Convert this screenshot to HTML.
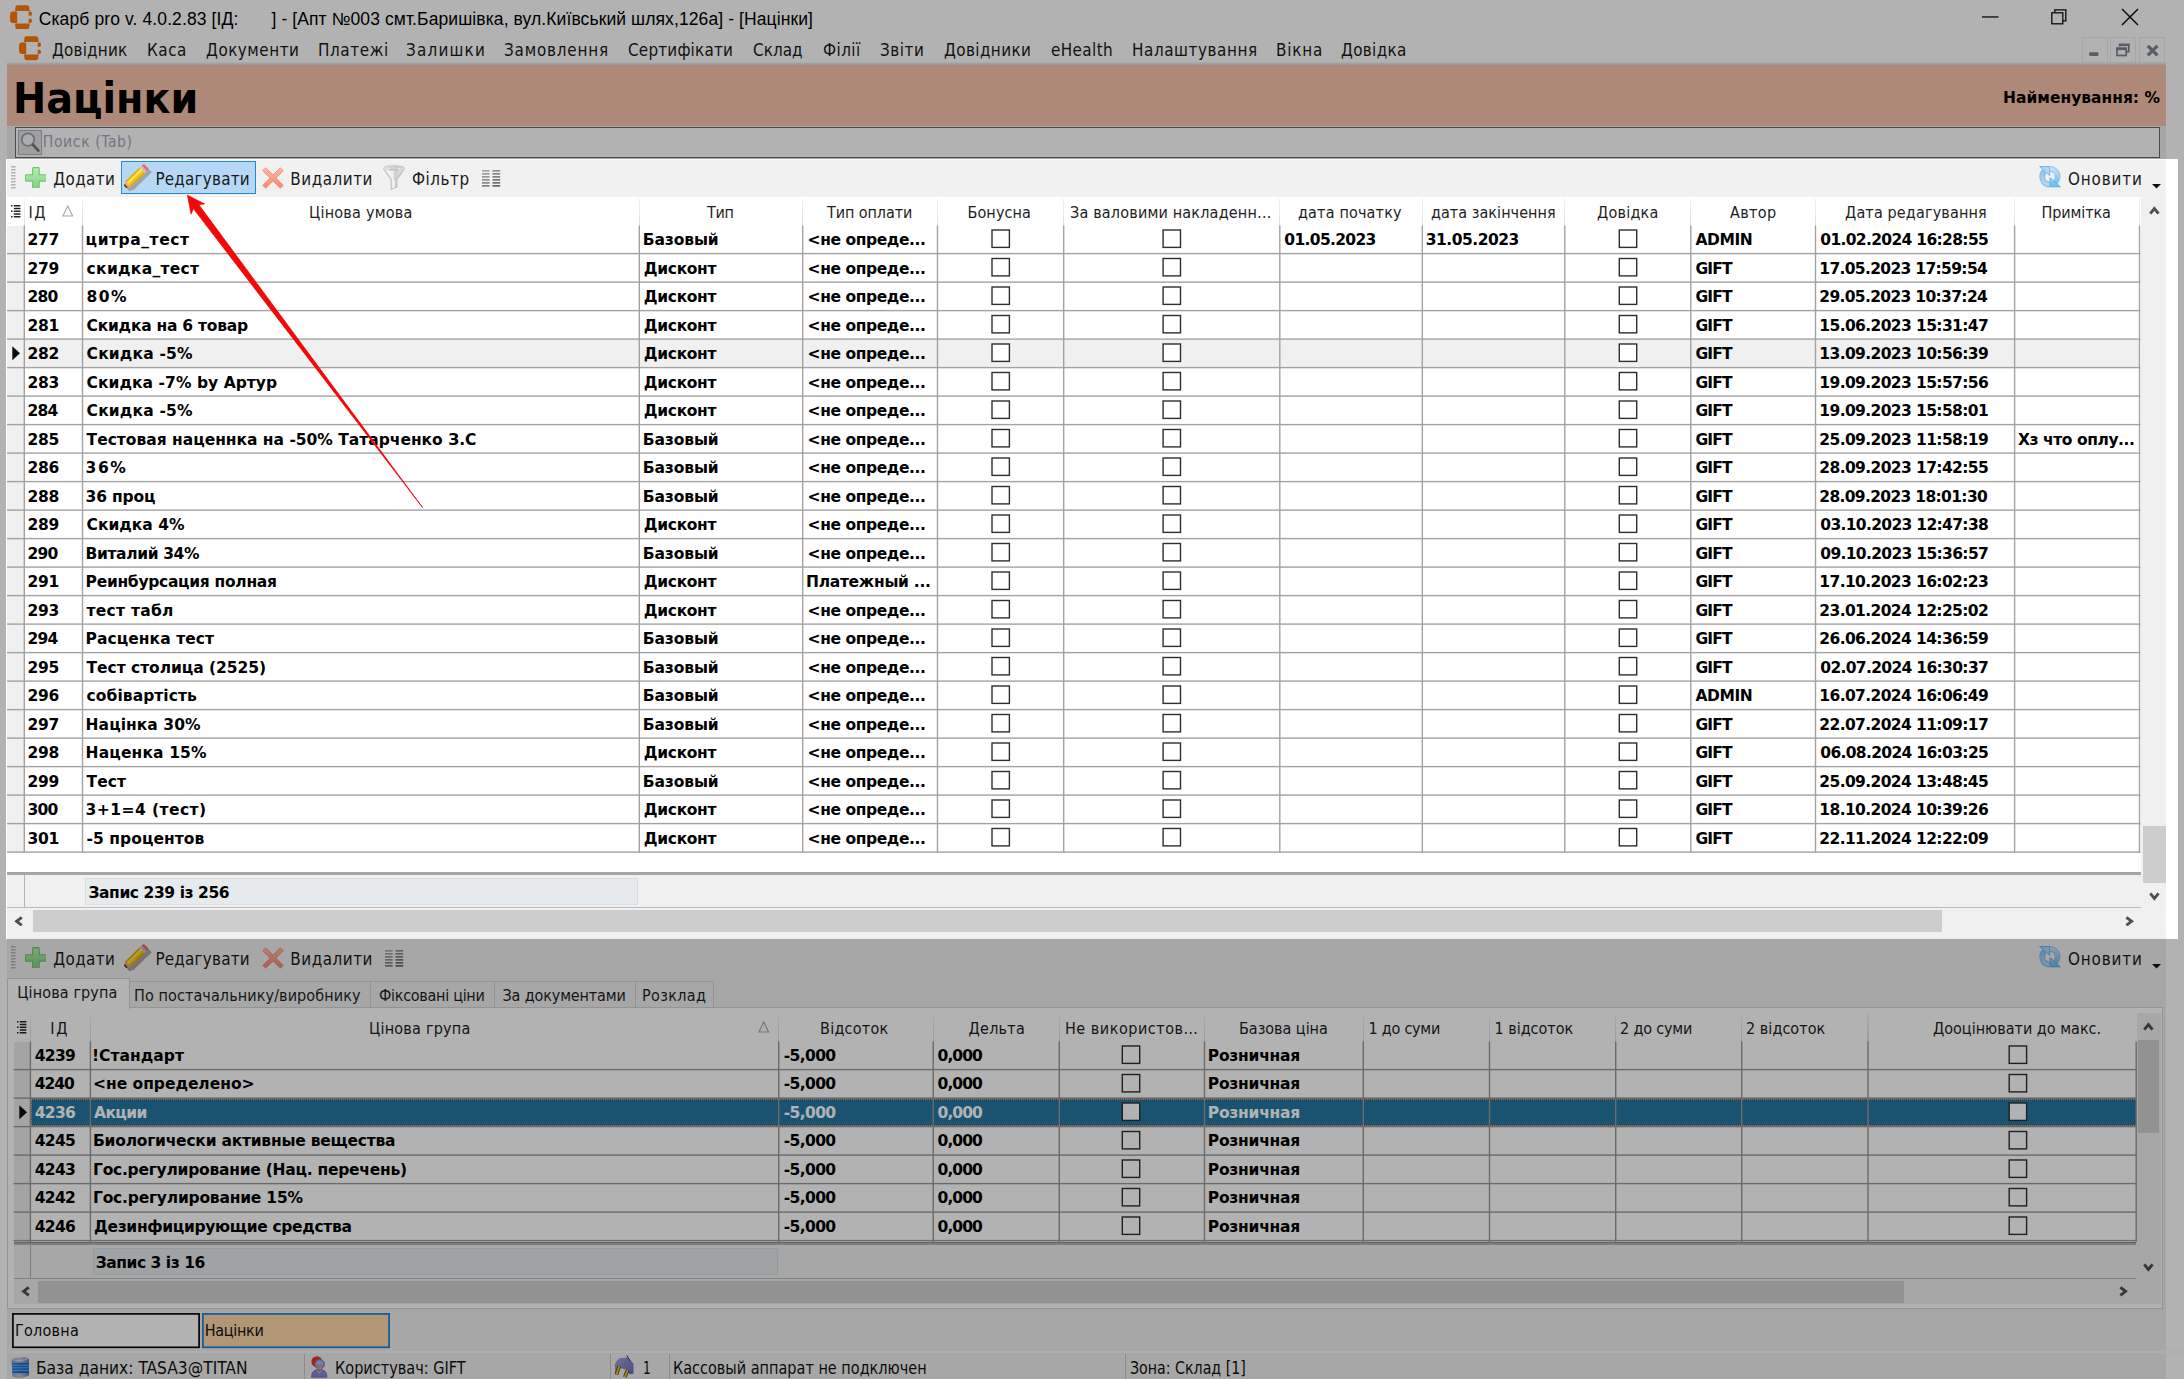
<!DOCTYPE html>
<html lang="uk"><head><meta charset="utf-8"><title>Націнки</title>
<style>
html,body{margin:0;padding:0;}
body{width:2184px;height:1379px;overflow:hidden;position:relative;background:#fff;}
.r{position:absolute;display:block;}
.t{position:absolute;white-space:pre;display:block;}
.dj{font-family:"DejaVu Sans","Liberation Sans",sans-serif;}
.djc{font-family:"DejaVu Sans Condensed","DejaVu Sans","Liberation Sans",sans-serif;}
.lib{font-family:"Liberation Sans",sans-serif;}
</style></head><body>
<svg width="0" height="0" style="position:absolute;left:0;top:0"><defs><linearGradient id="pg" x1="0" y1="0" x2="0" y2="1"><stop offset="0" stop-color="#aef2ae"/><stop offset="1" stop-color="#84d084"/></linearGradient><linearGradient id="xg" x1="0" y1="0" x2="0" y2="1"><stop offset="0" stop-color="#ffb9a4"/><stop offset="1" stop-color="#f58672"/></linearGradient><linearGradient id="fg" x1="0" y1="0" x2="1" y2="0"><stop offset="0" stop-color="#f6f6f6"/><stop offset=".5" stop-color="#ececec"/><stop offset=".52" stop-color="#cfcfcf"/><stop offset="1" stop-color="#e2e2e2"/></linearGradient><linearGradient id="rg" x1="0" y1="0" x2="0" y2="1"><stop offset="0" stop-color="#a4d6fa"/><stop offset="1" stop-color="#b4dcf6"/></linearGradient><linearGradient id="rg2" x1="0" y1="0" x2="0" y2="1"><stop offset="0" stop-color="#b4daf6"/><stop offset=".5" stop-color="#86c6f2"/><stop offset="1" stop-color="#58c4fa"/></linearGradient><linearGradient id="rg3" x1="0" y1="0" x2="0" y2="1"><stop offset="0" stop-color="#8cc4f0"/><stop offset="1" stop-color="#b2d8f4"/></linearGradient><linearGradient id="rg4" x1="0" y1="0" x2="0" y2="1"><stop offset="0" stop-color="#c4e0f6"/><stop offset="1" stop-color="#7cc0f0"/></linearGradient><linearGradient id="dbg" x1="0" x2="1" y1="0" y2="0"><stop offset="0" stop-color="#9a9ac8"/><stop offset=".45" stop-color="#c4c4de"/><stop offset="1" stop-color="#7c7cb0"/></linearGradient><linearGradient id="dbb" x1="0" x2="1" y1="0" y2="0"><stop offset="0" stop-color="#2a86e6"/><stop offset=".5" stop-color="#1670d6"/><stop offset="1" stop-color="#1c62c0"/></linearGradient><linearGradient id="plg" x1="0" x2="1" y1="0" y2="1"><stop offset="0" stop-color="#a4a4dc"/><stop offset="1" stop-color="#6a6ab8"/></linearGradient></defs></svg>
<div class="r" style="left:0.00px;top:0.00px;width:2184.00px;height:1379.00px;background:#f0f0f0;"></div>
<div class="r" style="left:0.00px;top:0.00px;width:2184.00px;height:62.50px;background:#ffffff;"></div>
<div class="r" style="left:7.00px;top:61.60px;width:2159.20px;height:3.20px;background:linear-gradient(#fafafa,#d6d6d6);"></div>
<div class="r" style="left:2166.20px;top:62.00px;width:18.00px;height:1320.00px;background:#ffffff;"></div>
<div class="r" style="left:0.00px;top:62.00px;width:7.00px;height:1320.00px;background:#ffffff;"></div>
<svg class="r" style="left:9.80px;top:4.60px;" width="22.0" height="24.5" viewBox="0 0 22 24.5"><g fill="#ff7a0a"><path d="M7.6 0.3h9.2c1.6 0 2.3 0.8 2.5 2.2l0.4 3.6H5l0.4-3.6C5.6 1.1 6.1 0.3 7.6 0.3z"/><path d="M7.6 24.2h9.2c1.6 0 2.3-0.8 2.5-2.2l0.4-3.6H5l0.4 3.6c0.2 1.4 0.7 2.2 2.2 2.2z"/><path d="M2.6 6.6h4.6v11.3H2.6c-1.5 0-2.3-0.9-2.4-2.3L0 12.2l0.2-3.3C0.3 7.5 1.1 6.6 2.6 6.6z"/><path d="M18.6 6.6h1.6c1.1 0 1.7 0.7 1.7 1.7v0.9c0 1-0.8 1.5-1.6 1.5h-1.7z"/><path d="M18.6 17.9h1.6c1.1 0 1.7-0.7 1.7-1.7v-0.9c0-1-0.8-1.5-1.6-1.5h-1.7z"/></g></svg>
<svg class="r" style="left:18.60px;top:36.40px;" width="22.0" height="24.5" viewBox="0 0 22 24.5"><g fill="#ff7a0a"><path d="M7.6 0.3h9.2c1.6 0 2.3 0.8 2.5 2.2l0.4 3.6H5l0.4-3.6C5.6 1.1 6.1 0.3 7.6 0.3z"/><path d="M7.6 24.2h9.2c1.6 0 2.3-0.8 2.5-2.2l0.4-3.6H5l0.4 3.6c0.2 1.4 0.7 2.2 2.2 2.2z"/><path d="M2.6 6.6h4.6v11.3H2.6c-1.5 0-2.3-0.9-2.4-2.3L0 12.2l0.2-3.3C0.3 7.5 1.1 6.6 2.6 6.6z"/><path d="M18.6 6.6h1.6c1.1 0 1.7 0.7 1.7 1.7v0.9c0 1-0.8 1.5-1.6 1.5h-1.7z"/><path d="M18.6 17.9h1.6c1.1 0 1.7-0.7 1.7-1.7v-0.9c0-1-0.8-1.5-1.6-1.5h-1.7z"/></g></svg>
<span class="t lib" style="left:38.70px;top:8.14px;font-size:17.5px;line-height:23px;color:#000;letter-spacing:0.110px;">Скарб pro v. 4.0.2.83 [ІД:</span>
<span class="t lib" style="left:271.50px;top:8.14px;font-size:17.5px;line-height:23px;color:#000;letter-spacing:0.095px;">] - [Апт №003 смт.Баришівка, вул.Київський шлях,126а] - [Націнки]</span>
<svg class="r" style="left:1982.00px;top:16.00px;" width="17" height="2" viewBox="0 0 17 2"><rect x="0" y="0.3" width="16.5" height="1.3" fill="#111"/></svg>
<svg class="r" style="left:2051.00px;top:9.00px;" width="16" height="16" viewBox="0 0 16 16"><g fill="none" stroke="#111" stroke-width="1.3"><rect x="0.8" y="3.8" width="11" height="11"/><path d="M3.8 3.8V0.8h11v11h-3"/></g></svg>
<svg class="r" style="left:2121.00px;top:8.00px;" width="18" height="18" viewBox="0 0 18 18"><path d="M1 1L17 17M17 1L1 17" stroke="#111" stroke-width="1.5" fill="none"/></svg>
<span class="t djc" style="left:52.00px;top:38.95px;font-size:16.9px;line-height:22px;color:#1a1a1a;letter-spacing:0.190px;">Довідник</span>
<span class="t djc" style="left:147.00px;top:38.95px;font-size:16.9px;line-height:22px;color:#1a1a1a;letter-spacing:0.516px;">Каса</span>
<span class="t djc" style="left:206.00px;top:38.95px;font-size:16.9px;line-height:22px;color:#1a1a1a;letter-spacing:0.507px;">Документи</span>
<span class="t djc" style="left:318.00px;top:38.95px;font-size:16.9px;line-height:22px;color:#1a1a1a;letter-spacing:0.608px;">Платежі</span>
<span class="t djc" style="left:406.00px;top:38.95px;font-size:16.9px;line-height:22px;color:#1a1a1a;letter-spacing:1.213px;">Залишки</span>
<span class="t djc" style="left:504.00px;top:38.95px;font-size:16.9px;line-height:22px;color:#1a1a1a;letter-spacing:0.810px;">Замовлення</span>
<span class="t djc" style="left:628.00px;top:38.95px;font-size:16.9px;line-height:22px;color:#1a1a1a;letter-spacing:0.211px;">Сертифікати</span>
<span class="t djc" style="left:753.00px;top:38.95px;font-size:16.9px;line-height:22px;color:#1a1a1a;letter-spacing:0.045px;">Склад</span>
<span class="t djc" style="left:823.00px;top:38.95px;font-size:16.9px;line-height:22px;color:#1a1a1a;letter-spacing:0.440px;">Філії</span>
<span class="t djc" style="left:880.00px;top:38.95px;font-size:16.9px;line-height:22px;color:#1a1a1a;letter-spacing:0.558px;">Звіти</span>
<span class="t djc" style="left:944.00px;top:38.95px;font-size:16.9px;line-height:22px;color:#1a1a1a;letter-spacing:0.394px;">Довідники</span>
<span class="t djc" style="left:1051.00px;top:38.95px;font-size:16.9px;line-height:22px;color:#1a1a1a;letter-spacing:0.396px;">eHealth</span>
<span class="t djc" style="left:1132.00px;top:38.95px;font-size:16.9px;line-height:22px;color:#1a1a1a;letter-spacing:0.577px;">Налаштування</span>
<span class="t djc" style="left:1276.00px;top:38.95px;font-size:16.9px;line-height:22px;color:#1a1a1a;letter-spacing:0.809px;">Вікна</span>
<span class="t djc" style="left:1341.00px;top:38.95px;font-size:16.9px;line-height:22px;color:#1a1a1a;letter-spacing:0.327px;">Довідка</span>
<div class="r" style="left:2081.80px;top:37.00px;width:26.00px;height:25.60px;background:#ffffff;border:1px solid #eeeeee;box-sizing:border-box;"></div>
<div class="r" style="left:2110.30px;top:37.00px;width:26.00px;height:25.60px;background:#ffffff;border:1px solid #eeeeee;box-sizing:border-box;"></div>
<div class="r" style="left:2139.00px;top:37.00px;width:26.00px;height:25.60px;background:#ffffff;border:1px solid #eeeeee;box-sizing:border-box;"></div>
<svg class="r" style="left:2081.80px;top:37.00px;" width="26" height="25.6" viewBox="0 0 26 25.6"><rect x="7.200" y="15.300" width="9.200" height="3.800" rx="0.800" fill="#7d8798"/></svg>
<svg class="r" style="left:2110.30px;top:37.00px;" width="26" height="25.6" viewBox="0 0 26 25.6"><g fill="none" stroke="#7d8798" stroke-width="1.700"><path d="M9.600 9.500V7.500h9.200v7.200h-2.400"/><rect x="7" y="11.300" width="9.200" height="7.200"/></g><rect x="9" y="6.700" width="10.600" height="2.400" fill="#7d8798"/><rect x="6.200" y="10.500" width="10.800" height="2.600" fill="#7d8798"/></svg>
<svg class="r" style="left:2139.00px;top:37.00px;" width="26" height="25.6" viewBox="0 0 26 25.6"><path d="M8.800 8.800L18.400 18.400M18.400 8.800L8.800 18.400" stroke="#7d8798" stroke-width="3.200" fill="none"/></svg>
<div class="r" style="left:7.00px;top:64.60px;width:2159.00px;height:61.60px;background:#fac5ab;"></div>
<span class="t dj" style="left:13.35px;top:70.05px;font-size:43.5px;line-height:57px;color:#000;font-weight:bold;transform:scaleX(0.9126);transform-origin:0 0;">Націнки</span>
<span class="t dj" style="left:2002.68px;top:87.54px;font-size:15.2px;line-height:20px;color:#000;font-weight:bold;transform:scaleX(1.0199);transform-origin:0 0;">Найменування: %</span>
<div class="r" style="left:7.00px;top:126.20px;width:2159.00px;height:32.50px;background:#f0f0f0;"></div>
<div class="r" style="left:15.00px;top:127.20px;width:2144.50px;height:31.20px;background:#ffffff;border:1.6px solid #6a6a6a;box-sizing:border-box;"></div>
<div class="r" style="left:18.00px;top:130.00px;width:23.50px;height:24.50px;background:#e4e4e4;border:1px solid #b5b5b5;box-sizing:border-box;"></div>
<svg class="r" style="left:19.00px;top:131.00px;" width="22" height="22" viewBox="0 0 22 22"><circle cx="9" cy="8.6" r="6.3" fill="#f4f8fc" stroke="#9aa3ad" stroke-width="1.8"/><path d="M13.6 13.4L19.4 19.6" stroke="#777" stroke-width="2.8" stroke-linecap="round"/></svg>
<span class="t djc" style="left:42.80px;top:131.50px;font-size:15.6px;line-height:20px;color:#a4aabc;letter-spacing:0.595px;">Поиск (Tab)</span>
<div class="r" style="left:5.90px;top:159.00px;width:2172.20px;height:780.20px;background:#ffffff;"></div>
<div class="r" style="left:7.00px;top:159.00px;width:2159.20px;height:780.40px;background:#f1f1f1;"></div>
<div class="r" style="left:7.00px;top:159.00px;width:2159.20px;height:1.20px;background:#fcfcfc;"></div>
<svg class="r" style="left:11.40px;top:165.60px;" width="4.6" height="23" viewBox="0 0 4.6 23"><rect x="0" y="0.0" width="4.600" height="1.500" fill="#b2b2b2"/><rect x="0" y="3.0" width="4.600" height="1.500" fill="#b2b2b2"/><rect x="0" y="6.0" width="4.600" height="1.500" fill="#b2b2b2"/><rect x="0" y="9.0" width="4.600" height="1.500" fill="#b2b2b2"/><rect x="0" y="12.0" width="4.600" height="1.500" fill="#b2b2b2"/><rect x="0" y="15.0" width="4.600" height="1.500" fill="#b2b2b2"/><rect x="0" y="18.0" width="4.600" height="1.500" fill="#b2b2b2"/><rect x="0" y="21.0" width="4.600" height="1.500" fill="#b2b2b2"/></svg>
<svg class="r" style="left:24.70px;top:166.50px;" width="21.6" height="21.4" viewBox="0 0 21.6 21.4"><path d="M8.6 0.6h4.6q1 0 1 1v6.200h6.200q1 0 1 1v4.300q0 1-1 1h-6.200v6.200q0 1-1 1H8.600q-1 0-1-1v-6.200H1.400q-1 0-1-1V8.800q0-1 1-1h6.200V1.600q0-1 1-1z" fill="url(#pg)" stroke="#72c472" stroke-width="1.1"/></svg>
<span class="t djc" style="left:53.20px;top:167.75px;font-size:16.9px;line-height:22px;color:#1a1a1a;letter-spacing:0.392px;">Додати</span>
<div class="r" style="left:121.20px;top:161.00px;width:134.60px;height:33.00px;background:#b6d8f5;border:1.8px solid #2488d8;box-sizing:border-box;"></div>
<svg class="r" style="left:121.60px;top:162.00px;" width="32" height="32" viewBox="0 0 32 32"><g transform="translate(6.100,28) rotate(-44.200)"><path d="M0 -1.600L4.200 -3.800H29.300V3.800H4.200L0 1.600z" fill="#a0a0a0" opacity=".92"/></g><g transform="translate(3.200,24.800) rotate(-44.200)"><path d="M0 -1.600L4.200 -3.800H23.800V3.800H4.200L0 1.600z" fill="#f6c60a"/><path d="M4.200 -3.800H23.800V-2.600H4.200z" fill="#d9a514"/><path d="M4.200 -1.900H23.800V0.100H4.200z" fill="#fde46a"/><path d="M4.200 2.400H23.800V3.800H4.200z" fill="#dfa80c"/><path d="M0 -1.600L4.200 -3.800V3.800L0 1.600z" fill="#f4a47c"/><path d="M0 -1.600L1.500 -2.300V2.300L0 1.600z" fill="#3a3430"/><path d="M23.800 -3.800h2.800V3.800h-2.800z" fill="#d4d4d4"/><path d="M24.900 -3.800h0.800V3.800h-0.800z" fill="#a8a8a8"/><path d="M26.600 -3.800h1.200q1.600 0 1.600 1.600v4.400q0 1.600 -1.600 1.600h-1.200z" fill="#f06464"/></g></svg>
<span class="t djc" style="left:155.40px;top:167.75px;font-size:16.9px;line-height:22px;color:#1a1a1a;letter-spacing:0.220px;">Редагувати</span>
<svg class="r" style="left:261.50px;top:166.60px;" width="22" height="22" viewBox="0 0 22 22"><path d="M3.700 0.700L11 8 18.300 0.700 21.300 3.700 14 11 21.300 18.300 18.300 21.300 11 14 3.700 21.300 0.700 18.300 8 11 0.700 3.700z" fill="url(#xg)" stroke="#f2917e" stroke-width="0.9" stroke-linejoin="round"/></svg>
<span class="t djc" style="left:290.30px;top:167.75px;font-size:16.9px;line-height:22px;color:#1a1a1a;letter-spacing:0.521px;">Видалити</span>
<svg class="r" style="left:383.00px;top:164.70px;" width="22" height="25" viewBox="0 0 22 25"><path d="M0.700 3.500C0.700 1.800 5 0.700 11 0.700s10.300 1.100 10.300 2.800c0 0.800 -0.600 1.400 -1.400 2.400L13.800 14.600V22L8.200 24.200V14.600L2.100 5.900C1.300 4.900 0.700 4.300 0.700 3.500z" fill="url(#fg)" stroke="#bdbdbd" stroke-width="1.100"/><ellipse cx="11" cy="3.800" rx="8" ry="1.500" fill="#f4f4f4" stroke="#c4c4c4" stroke-width=".9"/><path d="M6.500 4.100h9" stroke="#a8a8a8" stroke-width="1"/><path d="M11 15.500V22.500" stroke="#f6f6f6" stroke-width="1.400"/></svg>
<span class="t djc" style="left:412.00px;top:167.75px;font-size:16.9px;line-height:22px;color:#1a1a1a;letter-spacing:0.535px;">Фільтр</span>
<svg class="r" style="left:482.40px;top:169.60px;" width="18.4" height="17" viewBox="0 0 18.4 17"><rect x="0" y="0.00" width="7.600" height="1.700" fill="#a8a8a8"/><rect x="10.500" y="0.00" width="7.700" height="1.700" fill="#909090"/><rect x="0" y="3.00" width="7.600" height="1.700" fill="#a0a0a0"/><rect x="10.500" y="3.00" width="7.700" height="1.700" fill="#878787"/><rect x="0" y="6.00" width="7.600" height="1.700" fill="#989898"/><rect x="10.500" y="6.00" width="7.700" height="1.700" fill="#7e7e7e"/><rect x="0" y="9.00" width="7.600" height="1.700" fill="#909090"/><rect x="10.500" y="9.00" width="7.700" height="1.700" fill="#757575"/><rect x="0" y="12.00" width="7.600" height="1.700" fill="#888888"/><rect x="10.500" y="12.00" width="7.700" height="1.700" fill="#6c6c6c"/><rect x="0" y="15.00" width="7.600" height="1.700" fill="#808080"/><rect x="10.500" y="15.00" width="7.700" height="1.700" fill="#636363"/></svg>
<svg class="r" style="left:2038.90px;top:166.20px;" width="22" height="21.4" viewBox="0 0 22 21.4"><path d="M10.800 18.600C5.900 18.300 3.100 14.600 3.200 10.600 3.300 8.400 4 6.600 5.400 5.200" fill="none" stroke="#7ab6ea" stroke-width="5.800"/><path d="M10.800 18.600C5.900 18.300 3.100 14.600 3.200 10.600 3.300 8.400 4 6.600 5.400 5.200" fill="none" stroke="url(#rg3)" stroke-width="4"/><path d="M0.600 0.500H10.700V9.500z" fill="url(#rg)" stroke="#74b2e8" stroke-width="1" stroke-linejoin="round"/><path d="M11 2.800C15.900 3.100 18.700 6.800 18.600 10.800 18.500 13 17.800 14.800 16.400 16.200" fill="none" stroke="#8cc2ec" stroke-width="5.800"/><path d="M11 2.800C15.900 3.100 18.700 6.800 18.600 10.800 18.500 13 17.800 14.800 16.400 16.200" fill="none" stroke="url(#rg4)" stroke-width="4"/><path d="M21.300 20.800H11.100V11.800z" fill="url(#rg2)" stroke="#5aaae6" stroke-width="1" stroke-linejoin="round"/></svg>
<span class="t djc" style="left:2068.00px;top:167.75px;font-size:16.9px;line-height:22px;color:#1a1a1a;letter-spacing:0.855px;">Оновити</span>
<svg class="r" style="left:2151.50px;top:183.90px;" width="9" height="5" viewBox="0 0 9 5"><path d="M0 0h9L4.5 4.6z" fill="#111"/></svg>
<div class="r" style="left:7.00px;top:196.60px;width:2133.50px;height:29.00px;background:#ffffff;"></div>
<div class="r" style="left:7.00px;top:225.60px;width:2133.50px;height:626.50px;background:#ffffff;"></div>
<div class="r" style="left:7.00px;top:852.00px;width:2133.50px;height:20.60px;background:#ffffff;"></div>
<div class="r" style="left:23.70px;top:198.00px;width:1.30px;height:27.60px;background:linear-gradient(#f4f4f4,#dedede);"></div>
<div class="r" style="left:81.90px;top:198.00px;width:1.30px;height:27.60px;background:linear-gradient(#f4f4f4,#dedede);"></div>
<div class="r" style="left:638.70px;top:198.00px;width:1.30px;height:27.60px;background:linear-gradient(#f4f4f4,#dedede);"></div>
<div class="r" style="left:802.10px;top:198.00px;width:1.30px;height:27.60px;background:linear-gradient(#f4f4f4,#dedede);"></div>
<div class="r" style="left:936.90px;top:198.00px;width:1.30px;height:27.60px;background:linear-gradient(#f4f4f4,#dedede);"></div>
<div class="r" style="left:1063.10px;top:198.00px;width:1.30px;height:27.60px;background:linear-gradient(#f4f4f4,#dedede);"></div>
<div class="r" style="left:1279.20px;top:198.00px;width:1.30px;height:27.60px;background:linear-gradient(#f4f4f4,#dedede);"></div>
<div class="r" style="left:1421.70px;top:198.00px;width:1.30px;height:27.60px;background:linear-gradient(#f4f4f4,#dedede);"></div>
<div class="r" style="left:1564.20px;top:198.00px;width:1.30px;height:27.60px;background:linear-gradient(#f4f4f4,#dedede);"></div>
<div class="r" style="left:1690.20px;top:198.00px;width:1.30px;height:27.60px;background:linear-gradient(#f4f4f4,#dedede);"></div>
<div class="r" style="left:1814.90px;top:198.00px;width:1.30px;height:27.60px;background:linear-gradient(#f4f4f4,#dedede);"></div>
<div class="r" style="left:2014.00px;top:198.00px;width:1.30px;height:27.60px;background:linear-gradient(#f4f4f4,#dedede);"></div>
<div class="r" style="left:2138.90px;top:198.00px;width:1.30px;height:27.60px;background:linear-gradient(#f4f4f4,#dedede);"></div>
<svg class="r" style="left:11.20px;top:204.60px;" width="9.5" height="13" viewBox="0 0 9.5 13"><rect x="0" y="0.00" width="1.500" height="1.500" fill="#222"/><rect x="2.800" y="0.00" width="6.600" height="1.500" fill="#222"/><rect x="2.800" y="2.75" width="6.600" height="1.500" fill="#222"/><rect x="0" y="5.50" width="1.500" height="1.500" fill="#222"/><rect x="2.800" y="5.50" width="6.600" height="1.500" fill="#222"/><rect x="2.800" y="8.25" width="6.600" height="1.500" fill="#222"/><rect x="0" y="11.00" width="1.500" height="1.500" fill="#222"/><rect x="2.800" y="11.00" width="6.600" height="1.500" fill="#222"/></svg>
<span class="t djc" style="left:28.50px;top:201.96px;font-size:16px;line-height:21px;color:#1e1e1e;letter-spacing:1.600px;">ІД</span>
<span class="t djc" style="left:309.00px;top:201.96px;font-size:16px;line-height:21px;color:#1e1e1e;letter-spacing:0.233px;">Цінова умова</span>
<span class="t djc" style="left:707.00px;top:201.96px;font-size:16px;line-height:21px;color:#1e1e1e;letter-spacing:-0.320px;">Тип</span>
<span class="t djc" style="left:827.00px;top:201.96px;font-size:16px;line-height:21px;color:#1e1e1e;letter-spacing:-0.083px;">Тип оплати</span>
<span class="t djc" style="left:967.50px;top:201.96px;font-size:16px;line-height:21px;color:#1e1e1e;letter-spacing:0.094px;">Бонусна</span>
<span class="t djc" style="left:1070.00px;top:201.96px;font-size:16px;line-height:21px;color:#1e1e1e;letter-spacing:0.184px;">За валовими накладенн…</span>
<span class="t djc" style="left:1298.00px;top:201.96px;font-size:16px;line-height:21px;color:#1e1e1e;letter-spacing:0.166px;">дата початку</span>
<span class="t djc" style="left:1431.00px;top:201.96px;font-size:16px;line-height:21px;color:#1e1e1e;letter-spacing:0.048px;">дата закінчення</span>
<span class="t djc" style="left:1597.00px;top:201.96px;font-size:16px;line-height:21px;color:#1e1e1e;letter-spacing:0.219px;">Довідка</span>
<span class="t djc" style="left:1730.00px;top:201.96px;font-size:16px;line-height:21px;color:#1e1e1e;letter-spacing:0.371px;">Автор</span>
<span class="t djc" style="left:1845.00px;top:201.96px;font-size:16px;line-height:21px;color:#1e1e1e;letter-spacing:0.145px;">Дата редагування</span>
<span class="t djc" style="left:2041.50px;top:201.96px;font-size:16px;line-height:21px;color:#1e1e1e;letter-spacing:-0.108px;">Примітка</span>
<svg class="r" style="left:61.80px;top:204.60px;" width="11.5" height="12" viewBox="0 0 11.5 12"><path d="M5.75 1L10.6 11H0.9z" fill="#fdfdfd" stroke="#a8a8a8" stroke-width="1.1"/></svg>
<div class="r" style="left:24.30px;top:339.60px;width:2115.50px;height:28.50px;background:#f0f0f0;"></div>
<div class="r" style="left:7.00px;top:225.60px;width:17.30px;height:626.80px;background:#f0f0f0;"></div>
<svg class="r" style="left:0;top:0;pointer-events:none" width="2184" height="1379" viewBox="0 0 2184 1379"><rect x="7.00" y="252.90" width="2133.50" height="1.40" fill="#a2a2a2"/><rect x="7.00" y="281.40" width="2133.50" height="1.40" fill="#a2a2a2"/><rect x="7.00" y="309.90" width="2133.50" height="1.40" fill="#a2a2a2"/><rect x="7.00" y="338.40" width="2133.50" height="1.40" fill="#a2a2a2"/><rect x="7.00" y="366.90" width="2133.50" height="1.40" fill="#a2a2a2"/><rect x="7.00" y="395.40" width="2133.50" height="1.40" fill="#a2a2a2"/><rect x="7.00" y="423.90" width="2133.50" height="1.40" fill="#a2a2a2"/><rect x="7.00" y="452.40" width="2133.50" height="1.40" fill="#a2a2a2"/><rect x="7.00" y="480.90" width="2133.50" height="1.40" fill="#a2a2a2"/><rect x="7.00" y="509.40" width="2133.50" height="1.40" fill="#a2a2a2"/><rect x="7.00" y="537.90" width="2133.50" height="1.40" fill="#a2a2a2"/><rect x="7.00" y="566.40" width="2133.50" height="1.40" fill="#a2a2a2"/><rect x="7.00" y="594.90" width="2133.50" height="1.40" fill="#a2a2a2"/><rect x="7.00" y="623.40" width="2133.50" height="1.40" fill="#a2a2a2"/><rect x="7.00" y="651.90" width="2133.50" height="1.40" fill="#a2a2a2"/><rect x="7.00" y="680.40" width="2133.50" height="1.40" fill="#a2a2a2"/><rect x="7.00" y="708.90" width="2133.50" height="1.40" fill="#a2a2a2"/><rect x="7.00" y="737.40" width="2133.50" height="1.40" fill="#a2a2a2"/><rect x="7.00" y="765.90" width="2133.50" height="1.40" fill="#a2a2a2"/><rect x="7.00" y="794.40" width="2133.50" height="1.40" fill="#a2a2a2"/><rect x="7.00" y="822.90" width="2133.50" height="1.40" fill="#a2a2a2"/><rect x="7.00" y="851.40" width="2133.50" height="1.40" fill="#a2a2a2"/><rect x="23.60" y="225.60" width="1.40" height="626.80" fill="#a2a2a2"/><rect x="81.80" y="225.60" width="1.40" height="626.80" fill="#a2a2a2"/><rect x="638.60" y="225.60" width="1.40" height="626.80" fill="#a2a2a2"/><rect x="802.00" y="225.60" width="1.40" height="626.80" fill="#a2a2a2"/><rect x="936.80" y="225.60" width="1.40" height="626.80" fill="#a2a2a2"/><rect x="1063.00" y="225.60" width="1.40" height="626.80" fill="#a2a2a2"/><rect x="1279.10" y="225.60" width="1.40" height="626.80" fill="#a2a2a2"/><rect x="1421.60" y="225.60" width="1.40" height="626.80" fill="#a2a2a2"/><rect x="1564.10" y="225.60" width="1.40" height="626.80" fill="#a2a2a2"/><rect x="1690.10" y="225.60" width="1.40" height="626.80" fill="#a2a2a2"/><rect x="1814.80" y="225.60" width="1.40" height="626.80" fill="#a2a2a2"/><rect x="2013.90" y="225.60" width="1.40" height="626.80" fill="#a2a2a2"/><rect x="2138.80" y="225.60" width="1.40" height="626.80" fill="#a2a2a2"/></svg>
<span class="t dj" style="left:27.60px;top:230.14px;font-size:15.5px;line-height:20px;color:#000;font-weight:bold;letter-spacing:-0.285px;">277</span>
<span class="t dj" style="left:85.60px;top:230.14px;font-size:15.5px;line-height:20px;color:#000;font-weight:bold;letter-spacing:0.564px;">цитра_тест</span>
<span class="t dj" style="left:642.80px;top:230.14px;font-size:15.5px;line-height:20px;color:#000;font-weight:bold;letter-spacing:-0.126px;">Базовый</span>
<span class="t dj" style="left:807.60px;top:230.14px;font-size:15.5px;line-height:20px;color:#000;font-weight:bold;letter-spacing:-0.415px;">&lt;не опреде...</span>
<span class="t dj" style="left:1284.30px;top:230.14px;font-size:15.5px;line-height:20px;color:#000;font-weight:bold;letter-spacing:-0.663px;">01.05.2023</span>
<span class="t dj" style="left:1425.80px;top:230.14px;font-size:15.5px;line-height:20px;color:#000;font-weight:bold;letter-spacing:-0.497px;">31.05.2023</span>
<span class="t dj" style="left:1695.50px;top:230.14px;font-size:15.5px;line-height:20px;color:#000;font-weight:bold;letter-spacing:-0.438px;">ADMIN</span>
<span class="t dj" style="left:1820.30px;top:230.14px;font-size:15.5px;line-height:20px;color:#000;font-weight:bold;letter-spacing:-0.671px;">01.02.2024 16:28:55</span>
<span class="t dj" style="left:27.60px;top:258.64px;font-size:15.5px;line-height:20px;color:#000;font-weight:bold;letter-spacing:-0.285px;">279</span>
<span class="t dj" style="left:86.60px;top:258.64px;font-size:15.5px;line-height:20px;color:#000;font-weight:bold;letter-spacing:0.290px;">скидка_тест</span>
<span class="t dj" style="left:643.80px;top:258.64px;font-size:15.5px;line-height:20px;color:#000;font-weight:bold;letter-spacing:-0.339px;">Дисконт</span>
<span class="t dj" style="left:807.60px;top:258.64px;font-size:15.5px;line-height:20px;color:#000;font-weight:bold;letter-spacing:-0.415px;">&lt;не опреде...</span>
<span class="t dj" style="left:1695.50px;top:258.64px;font-size:15.5px;line-height:20px;color:#000;font-weight:bold;letter-spacing:-0.859px;">GIFT</span>
<span class="t dj" style="left:1819.30px;top:258.64px;font-size:15.5px;line-height:20px;color:#000;font-weight:bold;letter-spacing:-0.671px;">17.05.2023 17:59:54</span>
<span class="t dj" style="left:27.60px;top:287.14px;font-size:15.5px;line-height:20px;color:#000;font-weight:bold;letter-spacing:-0.785px;">280</span>
<span class="t dj" style="left:86.60px;top:287.14px;font-size:15.5px;line-height:20px;color:#000;font-weight:bold;letter-spacing:1.415px;">80%</span>
<span class="t dj" style="left:643.80px;top:287.14px;font-size:15.5px;line-height:20px;color:#000;font-weight:bold;letter-spacing:-0.339px;">Дисконт</span>
<span class="t dj" style="left:807.60px;top:287.14px;font-size:15.5px;line-height:20px;color:#000;font-weight:bold;letter-spacing:-0.415px;">&lt;не опреде...</span>
<span class="t dj" style="left:1695.50px;top:287.14px;font-size:15.5px;line-height:20px;color:#000;font-weight:bold;letter-spacing:-0.859px;">GIFT</span>
<span class="t dj" style="left:1819.30px;top:287.14px;font-size:15.5px;line-height:20px;color:#000;font-weight:bold;letter-spacing:-0.671px;">29.05.2023 10:37:24</span>
<span class="t dj" style="left:27.60px;top:315.64px;font-size:15.5px;line-height:20px;color:#000;font-weight:bold;letter-spacing:-0.285px;">281</span>
<span class="t dj" style="left:86.60px;top:315.64px;font-size:15.5px;line-height:20px;color:#000;font-weight:bold;letter-spacing:-0.244px;">Скидка на 6 товар</span>
<span class="t dj" style="left:643.80px;top:315.64px;font-size:15.5px;line-height:20px;color:#000;font-weight:bold;letter-spacing:-0.339px;">Дисконт</span>
<span class="t dj" style="left:807.60px;top:315.64px;font-size:15.5px;line-height:20px;color:#000;font-weight:bold;letter-spacing:-0.415px;">&lt;не опреде...</span>
<span class="t dj" style="left:1695.50px;top:315.64px;font-size:15.5px;line-height:20px;color:#000;font-weight:bold;letter-spacing:-0.859px;">GIFT</span>
<span class="t dj" style="left:1819.30px;top:315.64px;font-size:15.5px;line-height:20px;color:#000;font-weight:bold;letter-spacing:-0.615px;">15.06.2023 15:31:47</span>
<span class="t dj" style="left:27.60px;top:344.14px;font-size:15.5px;line-height:20px;color:#000;font-weight:bold;letter-spacing:-0.285px;">282</span>
<span class="t dj" style="left:86.60px;top:344.14px;font-size:15.5px;line-height:20px;color:#000;font-weight:bold;letter-spacing:0.170px;">Скидка -5%</span>
<span class="t dj" style="left:643.80px;top:344.14px;font-size:15.5px;line-height:20px;color:#000;font-weight:bold;letter-spacing:-0.339px;">Дисконт</span>
<span class="t dj" style="left:807.60px;top:344.14px;font-size:15.5px;line-height:20px;color:#000;font-weight:bold;letter-spacing:-0.415px;">&lt;не опреде...</span>
<span class="t dj" style="left:1695.50px;top:344.14px;font-size:15.5px;line-height:20px;color:#000;font-weight:bold;letter-spacing:-0.859px;">GIFT</span>
<span class="t dj" style="left:1819.30px;top:344.14px;font-size:15.5px;line-height:20px;color:#000;font-weight:bold;letter-spacing:-0.615px;">13.09.2023 10:56:39</span>
<span class="t dj" style="left:27.60px;top:372.64px;font-size:15.5px;line-height:20px;color:#000;font-weight:bold;letter-spacing:-0.285px;">283</span>
<span class="t dj" style="left:86.60px;top:372.64px;font-size:15.5px;line-height:20px;color:#000;font-weight:bold;letter-spacing:0.046px;">Скидка -7% by Артур</span>
<span class="t dj" style="left:643.80px;top:372.64px;font-size:15.5px;line-height:20px;color:#000;font-weight:bold;letter-spacing:-0.339px;">Дисконт</span>
<span class="t dj" style="left:807.60px;top:372.64px;font-size:15.5px;line-height:20px;color:#000;font-weight:bold;letter-spacing:-0.415px;">&lt;не опреде...</span>
<span class="t dj" style="left:1695.50px;top:372.64px;font-size:15.5px;line-height:20px;color:#000;font-weight:bold;letter-spacing:-0.859px;">GIFT</span>
<span class="t dj" style="left:1819.30px;top:372.64px;font-size:15.5px;line-height:20px;color:#000;font-weight:bold;letter-spacing:-0.615px;">19.09.2023 15:57:56</span>
<span class="t dj" style="left:27.60px;top:401.14px;font-size:15.5px;line-height:20px;color:#000;font-weight:bold;letter-spacing:-0.785px;">284</span>
<span class="t dj" style="left:86.60px;top:401.14px;font-size:15.5px;line-height:20px;color:#000;font-weight:bold;letter-spacing:0.170px;">Скидка -5%</span>
<span class="t dj" style="left:643.80px;top:401.14px;font-size:15.5px;line-height:20px;color:#000;font-weight:bold;letter-spacing:-0.339px;">Дисконт</span>
<span class="t dj" style="left:807.60px;top:401.14px;font-size:15.5px;line-height:20px;color:#000;font-weight:bold;letter-spacing:-0.415px;">&lt;не опреде...</span>
<span class="t dj" style="left:1695.50px;top:401.14px;font-size:15.5px;line-height:20px;color:#000;font-weight:bold;letter-spacing:-0.859px;">GIFT</span>
<span class="t dj" style="left:1819.30px;top:401.14px;font-size:15.5px;line-height:20px;color:#000;font-weight:bold;letter-spacing:-0.615px;">19.09.2023 15:58:01</span>
<span class="t dj" style="left:27.60px;top:429.64px;font-size:15.5px;line-height:20px;color:#000;font-weight:bold;letter-spacing:-0.285px;">285</span>
<span class="t dj" style="left:86.60px;top:429.64px;font-size:15.5px;line-height:20px;color:#000;font-weight:bold;letter-spacing:-0.012px;">Тестовая наценнка на -50% Татарченко З.С</span>
<span class="t dj" style="left:642.80px;top:429.64px;font-size:15.5px;line-height:20px;color:#000;font-weight:bold;letter-spacing:-0.126px;">Базовый</span>
<span class="t dj" style="left:807.60px;top:429.64px;font-size:15.5px;line-height:20px;color:#000;font-weight:bold;letter-spacing:-0.415px;">&lt;не опреде...</span>
<span class="t dj" style="left:1695.50px;top:429.64px;font-size:15.5px;line-height:20px;color:#000;font-weight:bold;letter-spacing:-0.859px;">GIFT</span>
<span class="t dj" style="left:1819.30px;top:429.64px;font-size:15.5px;line-height:20px;color:#000;font-weight:bold;letter-spacing:-0.615px;">25.09.2023 11:58:19</span>
<span class="t dj" style="left:2018.00px;top:429.64px;font-size:15.5px;line-height:20px;color:#000;font-weight:bold;letter-spacing:-0.432px;">Хз что оплу...</span>
<span class="t dj" style="left:27.60px;top:458.14px;font-size:15.5px;line-height:20px;color:#000;font-weight:bold;letter-spacing:-0.285px;">286</span>
<span class="t dj" style="left:85.60px;top:458.14px;font-size:15.5px;line-height:20px;color:#000;font-weight:bold;letter-spacing:1.600px;">36%</span>
<span class="t dj" style="left:642.80px;top:458.14px;font-size:15.5px;line-height:20px;color:#000;font-weight:bold;letter-spacing:-0.126px;">Базовый</span>
<span class="t dj" style="left:807.60px;top:458.14px;font-size:15.5px;line-height:20px;color:#000;font-weight:bold;letter-spacing:-0.415px;">&lt;не опреде...</span>
<span class="t dj" style="left:1695.50px;top:458.14px;font-size:15.5px;line-height:20px;color:#000;font-weight:bold;letter-spacing:-0.859px;">GIFT</span>
<span class="t dj" style="left:1819.30px;top:458.14px;font-size:15.5px;line-height:20px;color:#000;font-weight:bold;letter-spacing:-0.615px;">28.09.2023 17:42:55</span>
<span class="t dj" style="left:27.60px;top:486.64px;font-size:15.5px;line-height:20px;color:#000;font-weight:bold;letter-spacing:-0.285px;">288</span>
<span class="t dj" style="left:85.60px;top:486.64px;font-size:15.5px;line-height:20px;color:#000;font-weight:bold;letter-spacing:-0.170px;">36 проц</span>
<span class="t dj" style="left:642.80px;top:486.64px;font-size:15.5px;line-height:20px;color:#000;font-weight:bold;letter-spacing:-0.126px;">Базовый</span>
<span class="t dj" style="left:807.60px;top:486.64px;font-size:15.5px;line-height:20px;color:#000;font-weight:bold;letter-spacing:-0.415px;">&lt;не опреде...</span>
<span class="t dj" style="left:1695.50px;top:486.64px;font-size:15.5px;line-height:20px;color:#000;font-weight:bold;letter-spacing:-0.859px;">GIFT</span>
<span class="t dj" style="left:1819.30px;top:486.64px;font-size:15.5px;line-height:20px;color:#000;font-weight:bold;letter-spacing:-0.671px;">28.09.2023 18:01:30</span>
<span class="t dj" style="left:27.60px;top:515.14px;font-size:15.5px;line-height:20px;color:#000;font-weight:bold;letter-spacing:-0.285px;">289</span>
<span class="t dj" style="left:86.60px;top:515.14px;font-size:15.5px;line-height:20px;color:#000;font-weight:bold;letter-spacing:-0.004px;">Скидка 4%</span>
<span class="t dj" style="left:643.80px;top:515.14px;font-size:15.5px;line-height:20px;color:#000;font-weight:bold;letter-spacing:-0.339px;">Дисконт</span>
<span class="t dj" style="left:807.60px;top:515.14px;font-size:15.5px;line-height:20px;color:#000;font-weight:bold;letter-spacing:-0.415px;">&lt;не опреде...</span>
<span class="t dj" style="left:1695.50px;top:515.14px;font-size:15.5px;line-height:20px;color:#000;font-weight:bold;letter-spacing:-0.859px;">GIFT</span>
<span class="t dj" style="left:1820.30px;top:515.14px;font-size:15.5px;line-height:20px;color:#000;font-weight:bold;letter-spacing:-0.671px;">03.10.2023 12:47:38</span>
<span class="t dj" style="left:27.60px;top:543.64px;font-size:15.5px;line-height:20px;color:#000;font-weight:bold;letter-spacing:-0.785px;">290</span>
<span class="t dj" style="left:85.60px;top:543.64px;font-size:15.5px;line-height:20px;color:#000;font-weight:bold;letter-spacing:-0.376px;">Виталий 34%</span>
<span class="t dj" style="left:642.80px;top:543.64px;font-size:15.5px;line-height:20px;color:#000;font-weight:bold;letter-spacing:-0.126px;">Базовый</span>
<span class="t dj" style="left:807.60px;top:543.64px;font-size:15.5px;line-height:20px;color:#000;font-weight:bold;letter-spacing:-0.415px;">&lt;не опреде...</span>
<span class="t dj" style="left:1695.50px;top:543.64px;font-size:15.5px;line-height:20px;color:#000;font-weight:bold;letter-spacing:-0.859px;">GIFT</span>
<span class="t dj" style="left:1820.30px;top:543.64px;font-size:15.5px;line-height:20px;color:#000;font-weight:bold;letter-spacing:-0.671px;">09.10.2023 15:36:57</span>
<span class="t dj" style="left:27.60px;top:572.14px;font-size:15.5px;line-height:20px;color:#000;font-weight:bold;letter-spacing:-0.285px;">291</span>
<span class="t dj" style="left:85.60px;top:572.14px;font-size:15.5px;line-height:20px;color:#000;font-weight:bold;letter-spacing:-0.294px;">Реинбурсация полная</span>
<span class="t dj" style="left:643.80px;top:572.14px;font-size:15.5px;line-height:20px;color:#000;font-weight:bold;letter-spacing:-0.339px;">Дисконт</span>
<span class="t dj" style="left:806.00px;top:572.14px;font-size:15.5px;line-height:20px;color:#000;font-weight:bold;letter-spacing:-0.289px;">Платежный ...</span>
<span class="t dj" style="left:1695.50px;top:572.14px;font-size:15.5px;line-height:20px;color:#000;font-weight:bold;letter-spacing:-0.859px;">GIFT</span>
<span class="t dj" style="left:1819.30px;top:572.14px;font-size:15.5px;line-height:20px;color:#000;font-weight:bold;letter-spacing:-0.615px;">17.10.2023 16:02:23</span>
<span class="t dj" style="left:27.60px;top:600.64px;font-size:15.5px;line-height:20px;color:#000;font-weight:bold;letter-spacing:-0.285px;">293</span>
<span class="t dj" style="left:86.60px;top:600.64px;font-size:15.5px;line-height:20px;color:#000;font-weight:bold;letter-spacing:0.259px;">тест табл</span>
<span class="t dj" style="left:643.80px;top:600.64px;font-size:15.5px;line-height:20px;color:#000;font-weight:bold;letter-spacing:-0.339px;">Дисконт</span>
<span class="t dj" style="left:807.60px;top:600.64px;font-size:15.5px;line-height:20px;color:#000;font-weight:bold;letter-spacing:-0.415px;">&lt;не опреде...</span>
<span class="t dj" style="left:1695.50px;top:600.64px;font-size:15.5px;line-height:20px;color:#000;font-weight:bold;letter-spacing:-0.859px;">GIFT</span>
<span class="t dj" style="left:1819.30px;top:600.64px;font-size:15.5px;line-height:20px;color:#000;font-weight:bold;letter-spacing:-0.615px;">23.01.2024 12:25:02</span>
<span class="t dj" style="left:27.60px;top:629.14px;font-size:15.5px;line-height:20px;color:#000;font-weight:bold;letter-spacing:-0.785px;">294</span>
<span class="t dj" style="left:85.60px;top:629.14px;font-size:15.5px;line-height:20px;color:#000;font-weight:bold;letter-spacing:0.052px;">Расценка тест</span>
<span class="t dj" style="left:642.80px;top:629.14px;font-size:15.5px;line-height:20px;color:#000;font-weight:bold;letter-spacing:-0.126px;">Базовый</span>
<span class="t dj" style="left:807.60px;top:629.14px;font-size:15.5px;line-height:20px;color:#000;font-weight:bold;letter-spacing:-0.415px;">&lt;не опреде...</span>
<span class="t dj" style="left:1695.50px;top:629.14px;font-size:15.5px;line-height:20px;color:#000;font-weight:bold;letter-spacing:-0.859px;">GIFT</span>
<span class="t dj" style="left:1819.30px;top:629.14px;font-size:15.5px;line-height:20px;color:#000;font-weight:bold;letter-spacing:-0.615px;">26.06.2024 14:36:59</span>
<span class="t dj" style="left:27.60px;top:657.64px;font-size:15.5px;line-height:20px;color:#000;font-weight:bold;letter-spacing:-0.285px;">295</span>
<span class="t dj" style="left:86.60px;top:657.64px;font-size:15.5px;line-height:20px;color:#000;font-weight:bold;letter-spacing:-0.047px;">Тест столица (2525)</span>
<span class="t dj" style="left:642.80px;top:657.64px;font-size:15.5px;line-height:20px;color:#000;font-weight:bold;letter-spacing:-0.126px;">Базовый</span>
<span class="t dj" style="left:807.60px;top:657.64px;font-size:15.5px;line-height:20px;color:#000;font-weight:bold;letter-spacing:-0.415px;">&lt;не опреде...</span>
<span class="t dj" style="left:1695.50px;top:657.64px;font-size:15.5px;line-height:20px;color:#000;font-weight:bold;letter-spacing:-0.859px;">GIFT</span>
<span class="t dj" style="left:1820.30px;top:657.64px;font-size:15.5px;line-height:20px;color:#000;font-weight:bold;letter-spacing:-0.671px;">02.07.2024 16:30:37</span>
<span class="t dj" style="left:27.60px;top:686.14px;font-size:15.5px;line-height:20px;color:#000;font-weight:bold;letter-spacing:-0.285px;">296</span>
<span class="t dj" style="left:86.60px;top:686.14px;font-size:15.5px;line-height:20px;color:#000;font-weight:bold;letter-spacing:0.054px;">собівартість</span>
<span class="t dj" style="left:642.80px;top:686.14px;font-size:15.5px;line-height:20px;color:#000;font-weight:bold;letter-spacing:-0.126px;">Базовый</span>
<span class="t dj" style="left:807.60px;top:686.14px;font-size:15.5px;line-height:20px;color:#000;font-weight:bold;letter-spacing:-0.415px;">&lt;не опреде...</span>
<span class="t dj" style="left:1695.50px;top:686.14px;font-size:15.5px;line-height:20px;color:#000;font-weight:bold;letter-spacing:-0.438px;">ADMIN</span>
<span class="t dj" style="left:1819.30px;top:686.14px;font-size:15.5px;line-height:20px;color:#000;font-weight:bold;letter-spacing:-0.615px;">16.07.2024 16:06:49</span>
<span class="t dj" style="left:27.60px;top:714.64px;font-size:15.5px;line-height:20px;color:#000;font-weight:bold;letter-spacing:-0.285px;">297</span>
<span class="t dj" style="left:85.60px;top:714.64px;font-size:15.5px;line-height:20px;color:#000;font-weight:bold;letter-spacing:0.051px;">Націнка 30%</span>
<span class="t dj" style="left:642.80px;top:714.64px;font-size:15.5px;line-height:20px;color:#000;font-weight:bold;letter-spacing:-0.126px;">Базовый</span>
<span class="t dj" style="left:807.60px;top:714.64px;font-size:15.5px;line-height:20px;color:#000;font-weight:bold;letter-spacing:-0.415px;">&lt;не опреде...</span>
<span class="t dj" style="left:1695.50px;top:714.64px;font-size:15.5px;line-height:20px;color:#000;font-weight:bold;letter-spacing:-0.859px;">GIFT</span>
<span class="t dj" style="left:1819.30px;top:714.64px;font-size:15.5px;line-height:20px;color:#000;font-weight:bold;letter-spacing:-0.615px;">22.07.2024 11:09:17</span>
<span class="t dj" style="left:27.60px;top:743.14px;font-size:15.5px;line-height:20px;color:#000;font-weight:bold;letter-spacing:-0.285px;">298</span>
<span class="t dj" style="left:85.60px;top:743.14px;font-size:15.5px;line-height:20px;color:#000;font-weight:bold;letter-spacing:0.131px;">Наценка 15%</span>
<span class="t dj" style="left:643.80px;top:743.14px;font-size:15.5px;line-height:20px;color:#000;font-weight:bold;letter-spacing:-0.339px;">Дисконт</span>
<span class="t dj" style="left:807.60px;top:743.14px;font-size:15.5px;line-height:20px;color:#000;font-weight:bold;letter-spacing:-0.415px;">&lt;не опреде...</span>
<span class="t dj" style="left:1695.50px;top:743.14px;font-size:15.5px;line-height:20px;color:#000;font-weight:bold;letter-spacing:-0.859px;">GIFT</span>
<span class="t dj" style="left:1820.30px;top:743.14px;font-size:15.5px;line-height:20px;color:#000;font-weight:bold;letter-spacing:-0.671px;">06.08.2024 16:03:25</span>
<span class="t dj" style="left:27.60px;top:771.64px;font-size:15.5px;line-height:20px;color:#000;font-weight:bold;letter-spacing:-0.285px;">299</span>
<span class="t dj" style="left:86.60px;top:771.64px;font-size:15.5px;line-height:20px;color:#000;font-weight:bold;letter-spacing:0.042px;">Тест</span>
<span class="t dj" style="left:642.80px;top:771.64px;font-size:15.5px;line-height:20px;color:#000;font-weight:bold;letter-spacing:-0.126px;">Базовый</span>
<span class="t dj" style="left:807.60px;top:771.64px;font-size:15.5px;line-height:20px;color:#000;font-weight:bold;letter-spacing:-0.415px;">&lt;не опреде...</span>
<span class="t dj" style="left:1695.50px;top:771.64px;font-size:15.5px;line-height:20px;color:#000;font-weight:bold;letter-spacing:-0.859px;">GIFT</span>
<span class="t dj" style="left:1819.30px;top:771.64px;font-size:15.5px;line-height:20px;color:#000;font-weight:bold;letter-spacing:-0.615px;">25.09.2024 13:48:45</span>
<span class="t dj" style="left:27.60px;top:800.14px;font-size:15.5px;line-height:20px;color:#000;font-weight:bold;letter-spacing:-0.785px;">300</span>
<span class="t dj" style="left:85.60px;top:800.14px;font-size:15.5px;line-height:20px;color:#000;font-weight:bold;letter-spacing:0.448px;">3+1=4 (тест)</span>
<span class="t dj" style="left:643.80px;top:800.14px;font-size:15.5px;line-height:20px;color:#000;font-weight:bold;letter-spacing:-0.339px;">Дисконт</span>
<span class="t dj" style="left:807.60px;top:800.14px;font-size:15.5px;line-height:20px;color:#000;font-weight:bold;letter-spacing:-0.415px;">&lt;не опреде...</span>
<span class="t dj" style="left:1695.50px;top:800.14px;font-size:15.5px;line-height:20px;color:#000;font-weight:bold;letter-spacing:-0.859px;">GIFT</span>
<span class="t dj" style="left:1819.30px;top:800.14px;font-size:15.5px;line-height:20px;color:#000;font-weight:bold;letter-spacing:-0.615px;">18.10.2024 10:39:26</span>
<span class="t dj" style="left:27.60px;top:828.64px;font-size:15.5px;line-height:20px;color:#000;font-weight:bold;letter-spacing:-0.285px;">301</span>
<span class="t dj" style="left:86.60px;top:828.64px;font-size:15.5px;line-height:20px;color:#000;font-weight:bold;letter-spacing:0.045px;">-5 процентов</span>
<span class="t dj" style="left:643.80px;top:828.64px;font-size:15.5px;line-height:20px;color:#000;font-weight:bold;letter-spacing:-0.339px;">Дисконт</span>
<span class="t dj" style="left:807.60px;top:828.64px;font-size:15.5px;line-height:20px;color:#000;font-weight:bold;letter-spacing:-0.415px;">&lt;не опреде...</span>
<span class="t dj" style="left:1695.50px;top:828.64px;font-size:15.5px;line-height:20px;color:#000;font-weight:bold;letter-spacing:-0.859px;">GIFT</span>
<span class="t dj" style="left:1819.30px;top:828.64px;font-size:15.5px;line-height:20px;color:#000;font-weight:bold;letter-spacing:-0.615px;">22.11.2024 12:22:09</span>
<svg class="r" style="left:0;top:0;pointer-events:none" width="2184" height="1379" viewBox="0 0 2184 1379"><rect x="992.00" y="230.00" width="17.4" height="17.4" fill="#ffffff" stroke="#2e2e2e" stroke-width="1.4"/><rect x="1163.10" y="230.00" width="17.4" height="17.4" fill="#ffffff" stroke="#2e2e2e" stroke-width="1.4"/><rect x="1619.30" y="230.00" width="17.4" height="17.4" fill="#ffffff" stroke="#2e2e2e" stroke-width="1.4"/><rect x="992.00" y="258.50" width="17.4" height="17.4" fill="#ffffff" stroke="#2e2e2e" stroke-width="1.4"/><rect x="1163.10" y="258.50" width="17.4" height="17.4" fill="#ffffff" stroke="#2e2e2e" stroke-width="1.4"/><rect x="1619.30" y="258.50" width="17.4" height="17.4" fill="#ffffff" stroke="#2e2e2e" stroke-width="1.4"/><rect x="992.00" y="287.00" width="17.4" height="17.4" fill="#ffffff" stroke="#2e2e2e" stroke-width="1.4"/><rect x="1163.10" y="287.00" width="17.4" height="17.4" fill="#ffffff" stroke="#2e2e2e" stroke-width="1.4"/><rect x="1619.30" y="287.00" width="17.4" height="17.4" fill="#ffffff" stroke="#2e2e2e" stroke-width="1.4"/><rect x="992.00" y="315.50" width="17.4" height="17.4" fill="#ffffff" stroke="#2e2e2e" stroke-width="1.4"/><rect x="1163.10" y="315.50" width="17.4" height="17.4" fill="#ffffff" stroke="#2e2e2e" stroke-width="1.4"/><rect x="1619.30" y="315.50" width="17.4" height="17.4" fill="#ffffff" stroke="#2e2e2e" stroke-width="1.4"/><rect x="992.00" y="344.00" width="17.4" height="17.4" fill="#ffffff" stroke="#2e2e2e" stroke-width="1.4"/><rect x="1163.10" y="344.00" width="17.4" height="17.4" fill="#ffffff" stroke="#2e2e2e" stroke-width="1.4"/><rect x="1619.30" y="344.00" width="17.4" height="17.4" fill="#ffffff" stroke="#2e2e2e" stroke-width="1.4"/><rect x="992.00" y="372.50" width="17.4" height="17.4" fill="#ffffff" stroke="#2e2e2e" stroke-width="1.4"/><rect x="1163.10" y="372.50" width="17.4" height="17.4" fill="#ffffff" stroke="#2e2e2e" stroke-width="1.4"/><rect x="1619.30" y="372.50" width="17.4" height="17.4" fill="#ffffff" stroke="#2e2e2e" stroke-width="1.4"/><rect x="992.00" y="401.00" width="17.4" height="17.4" fill="#ffffff" stroke="#2e2e2e" stroke-width="1.4"/><rect x="1163.10" y="401.00" width="17.4" height="17.4" fill="#ffffff" stroke="#2e2e2e" stroke-width="1.4"/><rect x="1619.30" y="401.00" width="17.4" height="17.4" fill="#ffffff" stroke="#2e2e2e" stroke-width="1.4"/><rect x="992.00" y="429.50" width="17.4" height="17.4" fill="#ffffff" stroke="#2e2e2e" stroke-width="1.4"/><rect x="1163.10" y="429.50" width="17.4" height="17.4" fill="#ffffff" stroke="#2e2e2e" stroke-width="1.4"/><rect x="1619.30" y="429.50" width="17.4" height="17.4" fill="#ffffff" stroke="#2e2e2e" stroke-width="1.4"/><rect x="992.00" y="458.00" width="17.4" height="17.4" fill="#ffffff" stroke="#2e2e2e" stroke-width="1.4"/><rect x="1163.10" y="458.00" width="17.4" height="17.4" fill="#ffffff" stroke="#2e2e2e" stroke-width="1.4"/><rect x="1619.30" y="458.00" width="17.4" height="17.4" fill="#ffffff" stroke="#2e2e2e" stroke-width="1.4"/><rect x="992.00" y="486.50" width="17.4" height="17.4" fill="#ffffff" stroke="#2e2e2e" stroke-width="1.4"/><rect x="1163.10" y="486.50" width="17.4" height="17.4" fill="#ffffff" stroke="#2e2e2e" stroke-width="1.4"/><rect x="1619.30" y="486.50" width="17.4" height="17.4" fill="#ffffff" stroke="#2e2e2e" stroke-width="1.4"/><rect x="992.00" y="515.00" width="17.4" height="17.4" fill="#ffffff" stroke="#2e2e2e" stroke-width="1.4"/><rect x="1163.10" y="515.00" width="17.4" height="17.4" fill="#ffffff" stroke="#2e2e2e" stroke-width="1.4"/><rect x="1619.30" y="515.00" width="17.4" height="17.4" fill="#ffffff" stroke="#2e2e2e" stroke-width="1.4"/><rect x="992.00" y="543.50" width="17.4" height="17.4" fill="#ffffff" stroke="#2e2e2e" stroke-width="1.4"/><rect x="1163.10" y="543.50" width="17.4" height="17.4" fill="#ffffff" stroke="#2e2e2e" stroke-width="1.4"/><rect x="1619.30" y="543.50" width="17.4" height="17.4" fill="#ffffff" stroke="#2e2e2e" stroke-width="1.4"/><rect x="992.00" y="572.00" width="17.4" height="17.4" fill="#ffffff" stroke="#2e2e2e" stroke-width="1.4"/><rect x="1163.10" y="572.00" width="17.4" height="17.4" fill="#ffffff" stroke="#2e2e2e" stroke-width="1.4"/><rect x="1619.30" y="572.00" width="17.4" height="17.4" fill="#ffffff" stroke="#2e2e2e" stroke-width="1.4"/><rect x="992.00" y="600.50" width="17.4" height="17.4" fill="#ffffff" stroke="#2e2e2e" stroke-width="1.4"/><rect x="1163.10" y="600.50" width="17.4" height="17.4" fill="#ffffff" stroke="#2e2e2e" stroke-width="1.4"/><rect x="1619.30" y="600.50" width="17.4" height="17.4" fill="#ffffff" stroke="#2e2e2e" stroke-width="1.4"/><rect x="992.00" y="629.00" width="17.4" height="17.4" fill="#ffffff" stroke="#2e2e2e" stroke-width="1.4"/><rect x="1163.10" y="629.00" width="17.4" height="17.4" fill="#ffffff" stroke="#2e2e2e" stroke-width="1.4"/><rect x="1619.30" y="629.00" width="17.4" height="17.4" fill="#ffffff" stroke="#2e2e2e" stroke-width="1.4"/><rect x="992.00" y="657.50" width="17.4" height="17.4" fill="#ffffff" stroke="#2e2e2e" stroke-width="1.4"/><rect x="1163.10" y="657.50" width="17.4" height="17.4" fill="#ffffff" stroke="#2e2e2e" stroke-width="1.4"/><rect x="1619.30" y="657.50" width="17.4" height="17.4" fill="#ffffff" stroke="#2e2e2e" stroke-width="1.4"/><rect x="992.00" y="686.00" width="17.4" height="17.4" fill="#ffffff" stroke="#2e2e2e" stroke-width="1.4"/><rect x="1163.10" y="686.00" width="17.4" height="17.4" fill="#ffffff" stroke="#2e2e2e" stroke-width="1.4"/><rect x="1619.30" y="686.00" width="17.4" height="17.4" fill="#ffffff" stroke="#2e2e2e" stroke-width="1.4"/><rect x="992.00" y="714.50" width="17.4" height="17.4" fill="#ffffff" stroke="#2e2e2e" stroke-width="1.4"/><rect x="1163.10" y="714.50" width="17.4" height="17.4" fill="#ffffff" stroke="#2e2e2e" stroke-width="1.4"/><rect x="1619.30" y="714.50" width="17.4" height="17.4" fill="#ffffff" stroke="#2e2e2e" stroke-width="1.4"/><rect x="992.00" y="743.00" width="17.4" height="17.4" fill="#ffffff" stroke="#2e2e2e" stroke-width="1.4"/><rect x="1163.10" y="743.00" width="17.4" height="17.4" fill="#ffffff" stroke="#2e2e2e" stroke-width="1.4"/><rect x="1619.30" y="743.00" width="17.4" height="17.4" fill="#ffffff" stroke="#2e2e2e" stroke-width="1.4"/><rect x="992.00" y="771.50" width="17.4" height="17.4" fill="#ffffff" stroke="#2e2e2e" stroke-width="1.4"/><rect x="1163.10" y="771.50" width="17.4" height="17.4" fill="#ffffff" stroke="#2e2e2e" stroke-width="1.4"/><rect x="1619.30" y="771.50" width="17.4" height="17.4" fill="#ffffff" stroke="#2e2e2e" stroke-width="1.4"/><rect x="992.00" y="800.00" width="17.4" height="17.4" fill="#ffffff" stroke="#2e2e2e" stroke-width="1.4"/><rect x="1163.10" y="800.00" width="17.4" height="17.4" fill="#ffffff" stroke="#2e2e2e" stroke-width="1.4"/><rect x="1619.30" y="800.00" width="17.4" height="17.4" fill="#ffffff" stroke="#2e2e2e" stroke-width="1.4"/><rect x="992.00" y="828.50" width="17.4" height="17.4" fill="#ffffff" stroke="#2e2e2e" stroke-width="1.4"/><rect x="1163.10" y="828.50" width="17.4" height="17.4" fill="#ffffff" stroke="#2e2e2e" stroke-width="1.4"/><rect x="1619.30" y="828.50" width="17.4" height="17.4" fill="#ffffff" stroke="#2e2e2e" stroke-width="1.4"/></svg>
<svg class="r" style="left:12.20px;top:346.20px;" width="8.2" height="14.6" viewBox="0 0 8.2 14.6"><path d="M0.300 0.300L8 7.300 0.300 14.300z" fill="#0c0c0c"/></svg>
<div class="r" style="left:7.00px;top:872.00px;width:2134.00px;height:3.40px;background:#a6a6a6;"></div>
<div class="r" style="left:7.00px;top:875.40px;width:2133.50px;height:32.00px;background:#f0f0f0;"></div>
<div class="r" style="left:23.80px;top:875.40px;width:1.30px;height:32.00px;background:#b4b4b4;"></div>
<div class="r" style="left:7.00px;top:907.00px;width:2133.50px;height:1.30px;background:#b9b9b9;"></div>
<div class="r" style="left:85.00px;top:877.60px;width:553.00px;height:27.00px;background:#e6eaec;border:1px solid #d9dddf;box-sizing:border-box;"></div>
<span class="t dj" style="left:88.50px;top:882.64px;font-size:15.5px;line-height:20px;color:#000;font-weight:bold;letter-spacing:-0.424px;">Запис 239 із 256</span>
<div class="r" style="left:7.00px;top:909.60px;width:2133.50px;height:22.60px;background:#f0f0f0;"></div>
<div class="r" style="left:32.80px;top:909.60px;width:1909.50px;height:22.60px;background:#cdcdcd;"></div>
<svg class="r" style="left:14.20px;top:915.70px;" width="9.2" height="10.6" viewBox="0 0 9.2 10.6"><path d="M7.800 1.300L2.600 5.300 7.800 9.300" fill="none" stroke="#4f4f4f" stroke-width="2.900"/></svg>
<svg class="r" style="left:2124.80px;top:915.70px;" width="9.2" height="10.6" viewBox="0 0 9.2 10.6"><path d="M1.400 1.300L6.600 5.300 1.400 9.300" fill="none" stroke="#4f4f4f" stroke-width="2.900"/></svg>
<div class="r" style="left:2141.40px;top:196.60px;width:24.80px;height:712.00px;background:#f0f0f0;"></div>
<div class="r" style="left:2143.00px;top:826.00px;width:22.80px;height:56.60px;background:#cdcdcd;"></div>
<svg class="r" style="left:2149.00px;top:206.20px;" width="10.8" height="9" viewBox="0 0 10.8 9"><path d="M1.300 7.600L5.400 2.500 9.500 7.600" fill="none" stroke="#4f4f4f" stroke-width="2.900"/></svg>
<svg class="r" style="left:2149.00px;top:891.80px;" width="10.8" height="9" viewBox="0 0 10.8 9"><path d="M1.300 1.400L5.400 6.500 9.500 1.400" fill="none" stroke="#4f4f4f" stroke-width="2.900"/></svg>
<div class="r" style="left:7.00px;top:932.20px;width:2159.20px;height:7.20px;background:#f0f0f0;"></div>
<svg class="r" style="left:11.40px;top:945.60px;" width="4.6" height="23" viewBox="0 0 4.6 23"><rect x="0" y="0.0" width="4.600" height="1.500" fill="#b2b2b2"/><rect x="0" y="3.0" width="4.600" height="1.500" fill="#b2b2b2"/><rect x="0" y="6.0" width="4.600" height="1.500" fill="#b2b2b2"/><rect x="0" y="9.0" width="4.600" height="1.500" fill="#b2b2b2"/><rect x="0" y="12.0" width="4.600" height="1.500" fill="#b2b2b2"/><rect x="0" y="15.0" width="4.600" height="1.500" fill="#b2b2b2"/><rect x="0" y="18.0" width="4.600" height="1.500" fill="#b2b2b2"/><rect x="0" y="21.0" width="4.600" height="1.500" fill="#b2b2b2"/></svg>
<svg class="r" style="left:24.70px;top:946.50px;" width="21.6" height="21.4" viewBox="0 0 21.6 21.4"><path d="M8.6 0.6h4.6q1 0 1 1v6.200h6.200q1 0 1 1v4.300q0 1-1 1h-6.200v6.200q0 1-1 1H8.600q-1 0-1-1v-6.200H1.400q-1 0-1-1V8.800q0-1 1-1h6.200V1.600q0-1 1-1z" fill="url(#pg)" stroke="#72c472" stroke-width="1.1"/></svg>
<span class="t djc" style="left:53.20px;top:947.75px;font-size:16.9px;line-height:22px;color:#1a1a1a;letter-spacing:0.392px;">Додати</span>
<svg class="r" style="left:121.60px;top:942.00px;" width="32" height="32" viewBox="0 0 32 32"><g transform="translate(6.100,28) rotate(-44.200)"><path d="M0 -1.600L4.200 -3.800H29.300V3.800H4.200L0 1.600z" fill="#a0a0a0" opacity=".92"/></g><g transform="translate(3.200,24.800) rotate(-44.200)"><path d="M0 -1.600L4.200 -3.800H23.800V3.800H4.200L0 1.600z" fill="#f6c60a"/><path d="M4.200 -3.800H23.800V-2.600H4.200z" fill="#d9a514"/><path d="M4.200 -1.900H23.800V0.100H4.200z" fill="#fde46a"/><path d="M4.200 2.400H23.800V3.800H4.200z" fill="#dfa80c"/><path d="M0 -1.600L4.200 -3.800V3.800L0 1.600z" fill="#f4a47c"/><path d="M0 -1.600L1.500 -2.300V2.300L0 1.600z" fill="#3a3430"/><path d="M23.800 -3.800h2.800V3.800h-2.800z" fill="#d4d4d4"/><path d="M24.900 -3.800h0.800V3.800h-0.800z" fill="#a8a8a8"/><path d="M26.600 -3.800h1.200q1.600 0 1.600 1.600v4.400q0 1.600 -1.600 1.600h-1.200z" fill="#f06464"/></g></svg>
<span class="t djc" style="left:155.40px;top:947.75px;font-size:16.9px;line-height:22px;color:#1a1a1a;letter-spacing:0.220px;">Редагувати</span>
<svg class="r" style="left:261.50px;top:946.60px;" width="22" height="22" viewBox="0 0 22 22"><path d="M3.700 0.700L11 8 18.300 0.700 21.300 3.700 14 11 21.300 18.300 18.300 21.300 11 14 3.700 21.300 0.700 18.300 8 11 0.700 3.700z" fill="url(#xg)" stroke="#f2917e" stroke-width="0.9" stroke-linejoin="round"/></svg>
<span class="t djc" style="left:290.30px;top:947.75px;font-size:16.9px;line-height:22px;color:#1a1a1a;letter-spacing:0.521px;">Видалити</span>
<svg class="r" style="left:385.40px;top:949.60px;" width="18.4" height="17" viewBox="0 0 18.4 17"><rect x="0" y="0.00" width="7.600" height="1.700" fill="#a8a8a8"/><rect x="10.500" y="0.00" width="7.700" height="1.700" fill="#909090"/><rect x="0" y="3.00" width="7.600" height="1.700" fill="#a0a0a0"/><rect x="10.500" y="3.00" width="7.700" height="1.700" fill="#878787"/><rect x="0" y="6.00" width="7.600" height="1.700" fill="#989898"/><rect x="10.500" y="6.00" width="7.700" height="1.700" fill="#7e7e7e"/><rect x="0" y="9.00" width="7.600" height="1.700" fill="#909090"/><rect x="10.500" y="9.00" width="7.700" height="1.700" fill="#757575"/><rect x="0" y="12.00" width="7.600" height="1.700" fill="#888888"/><rect x="10.500" y="12.00" width="7.700" height="1.700" fill="#6c6c6c"/><rect x="0" y="15.00" width="7.600" height="1.700" fill="#808080"/><rect x="10.500" y="15.00" width="7.700" height="1.700" fill="#636363"/></svg>
<svg class="r" style="left:2038.90px;top:946.20px;" width="22" height="21.4" viewBox="0 0 22 21.4"><path d="M10.800 18.600C5.900 18.300 3.100 14.600 3.200 10.600 3.300 8.400 4 6.600 5.400 5.200" fill="none" stroke="#7ab6ea" stroke-width="5.800"/><path d="M10.800 18.600C5.900 18.300 3.100 14.600 3.200 10.600 3.300 8.400 4 6.600 5.400 5.200" fill="none" stroke="url(#rg3)" stroke-width="4"/><path d="M0.600 0.500H10.700V9.500z" fill="url(#rg)" stroke="#74b2e8" stroke-width="1" stroke-linejoin="round"/><path d="M11 2.800C15.900 3.100 18.700 6.800 18.600 10.800 18.500 13 17.800 14.800 16.400 16.200" fill="none" stroke="#8cc2ec" stroke-width="5.800"/><path d="M11 2.800C15.900 3.100 18.700 6.800 18.600 10.800 18.500 13 17.800 14.800 16.400 16.200" fill="none" stroke="url(#rg4)" stroke-width="4"/><path d="M21.300 20.800H11.100V11.800z" fill="url(#rg2)" stroke="#5aaae6" stroke-width="1" stroke-linejoin="round"/></svg>
<span class="t djc" style="left:2068.00px;top:947.75px;font-size:16.9px;line-height:22px;color:#1a1a1a;letter-spacing:0.855px;">Оновити</span>
<svg class="r" style="left:2151.50px;top:963.90px;" width="9" height="5" viewBox="0 0 9 5"><path d="M0 0h9L4.5 4.6z" fill="#111"/></svg>
<div class="r" style="left:7.00px;top:1007.20px;width:2155.50px;height:301.40px;background:#ffffff;border:1.3px solid #d4d4d4;box-sizing:border-box;"></div>
<div class="r" style="left:129.00px;top:981.40px;width:242.20px;height:26.60px;background:#f0f0f0;border:1.3px solid #d4d4d4;box-sizing:border-box;"></div>
<span class="t djc" style="left:134.00px;top:984.96px;font-size:16px;line-height:21px;color:#1e1e1e;letter-spacing:0.100px;">По постачальнику/виробнику</span>
<div class="r" style="left:370.00px;top:981.40px;width:124.70px;height:26.60px;background:#f0f0f0;border:1.3px solid #d4d4d4;box-sizing:border-box;"></div>
<span class="t djc" style="left:379.00px;top:984.96px;font-size:16px;line-height:21px;color:#1e1e1e;letter-spacing:-0.293px;">Фіксовані ціни</span>
<div class="r" style="left:493.50px;top:981.40px;width:142.20px;height:26.60px;background:#f0f0f0;border:1.3px solid #d4d4d4;box-sizing:border-box;"></div>
<span class="t djc" style="left:502.50px;top:984.96px;font-size:16px;line-height:21px;color:#1e1e1e;letter-spacing:-0.137px;">За документами</span>
<div class="r" style="left:634.50px;top:981.40px;width:79.20px;height:26.60px;background:#f0f0f0;border:1.3px solid #d4d4d4;box-sizing:border-box;"></div>
<span class="t djc" style="left:642.00px;top:984.96px;font-size:16px;line-height:21px;color:#1e1e1e;letter-spacing:0.357px;">Розклад</span>
<div class="r" style="left:7.00px;top:978.20px;width:122.60px;height:30.60px;background:#ffffff;border:1.3px solid #d4d4d4;border-bottom:none;box-sizing:border-box;"></div>
<span class="t djc" style="left:17.30px;top:982.36px;font-size:16px;line-height:21px;color:#1e1e1e;letter-spacing:0.118px;">Цінова група</span>
<div class="r" style="left:13.50px;top:1013.00px;width:2147.50px;height:291.00px;background:#f0f0f0;"></div>
<div class="r" style="left:13.50px;top:1013.00px;width:2123.00px;height:29.00px;background:#ffffff;"></div>
<div class="r" style="left:30.20px;top:1041.60px;width:2106.00px;height:200.00px;background:#ffffff;"></div>
<svg class="r" style="left:17.40px;top:1020.80px;" width="9.5" height="13" viewBox="0 0 9.5 13"><rect x="0" y="0.00" width="1.500" height="1.500" fill="#222"/><rect x="2.800" y="0.00" width="6.600" height="1.500" fill="#222"/><rect x="2.800" y="2.75" width="6.600" height="1.500" fill="#222"/><rect x="0" y="5.50" width="1.500" height="1.500" fill="#222"/><rect x="2.800" y="5.50" width="6.600" height="1.500" fill="#222"/><rect x="2.800" y="8.25" width="6.600" height="1.500" fill="#222"/><rect x="0" y="11.00" width="1.500" height="1.500" fill="#222"/><rect x="2.800" y="11.00" width="6.600" height="1.500" fill="#222"/></svg>
<div class="r" style="left:29.80px;top:1014.00px;width:1.30px;height:28.00px;background:linear-gradient(#f4f4f4,#dedede);"></div>
<div class="r" style="left:89.80px;top:1014.00px;width:1.30px;height:28.00px;background:linear-gradient(#f4f4f4,#dedede);"></div>
<div class="r" style="left:778.10px;top:1014.00px;width:1.30px;height:28.00px;background:linear-gradient(#f4f4f4,#dedede);"></div>
<div class="r" style="left:932.60px;top:1014.00px;width:1.30px;height:28.00px;background:linear-gradient(#f4f4f4,#dedede);"></div>
<div class="r" style="left:1058.70px;top:1014.00px;width:1.30px;height:28.00px;background:linear-gradient(#f4f4f4,#dedede);"></div>
<div class="r" style="left:1203.90px;top:1014.00px;width:1.30px;height:28.00px;background:linear-gradient(#f4f4f4,#dedede);"></div>
<div class="r" style="left:1362.70px;top:1014.00px;width:1.30px;height:28.00px;background:linear-gradient(#f4f4f4,#dedede);"></div>
<div class="r" style="left:1488.90px;top:1014.00px;width:1.30px;height:28.00px;background:linear-gradient(#f4f4f4,#dedede);"></div>
<div class="r" style="left:1615.10px;top:1014.00px;width:1.30px;height:28.00px;background:linear-gradient(#f4f4f4,#dedede);"></div>
<div class="r" style="left:1741.10px;top:1014.00px;width:1.30px;height:28.00px;background:linear-gradient(#f4f4f4,#dedede);"></div>
<div class="r" style="left:1867.40px;top:1014.00px;width:1.30px;height:28.00px;background:linear-gradient(#f4f4f4,#dedede);"></div>
<span class="t djc" style="left:50.30px;top:1017.96px;font-size:16px;line-height:21px;color:#1e1e1e;letter-spacing:1.600px;">ІД</span>
<span class="t djc" style="left:369.00px;top:1017.96px;font-size:16px;line-height:21px;color:#1e1e1e;letter-spacing:0.236px;">Цінова група</span>
<span class="t djc" style="left:820.00px;top:1017.96px;font-size:16px;line-height:21px;color:#1e1e1e;letter-spacing:0.252px;">Відсоток</span>
<span class="t djc" style="left:968.50px;top:1017.96px;font-size:16px;line-height:21px;color:#1e1e1e;letter-spacing:0.264px;">Дельта</span>
<span class="t djc" style="left:1065.00px;top:1017.96px;font-size:16px;line-height:21px;color:#1e1e1e;letter-spacing:0.525px;">Не використов…</span>
<span class="t djc" style="left:1239.00px;top:1017.96px;font-size:16px;line-height:21px;color:#1e1e1e;letter-spacing:-0.024px;">Базова ціна</span>
<span class="t djc" style="left:1368.50px;top:1017.96px;font-size:16px;line-height:21px;color:#1e1e1e;letter-spacing:-0.230px;">1 до суми</span>
<span class="t djc" style="left:1494.50px;top:1017.96px;font-size:16px;line-height:21px;color:#1e1e1e;letter-spacing:-0.008px;">1 відсоток</span>
<span class="t djc" style="left:1620.00px;top:1017.96px;font-size:16px;line-height:21px;color:#1e1e1e;letter-spacing:-0.168px;">2 до суми</span>
<span class="t djc" style="left:1746.00px;top:1017.96px;font-size:16px;line-height:21px;color:#1e1e1e;letter-spacing:0.048px;">2 відсоток</span>
<span class="t djc" style="left:1933.00px;top:1017.96px;font-size:16px;line-height:21px;color:#1e1e1e;letter-spacing:0.005px;">Дооцінювати до макс.</span>
<svg class="r" style="left:758.00px;top:1021.00px;" width="11.5" height="12" viewBox="0 0 11.5 12"><path d="M5.75 1L10.6 11H0.9z" fill="#fdfdfd" stroke="#a8a8a8" stroke-width="1.1"/></svg>
<div class="r" style="left:13.50px;top:1041.60px;width:16.70px;height:199.50px;background:#ebebeb;"></div>
<div class="r" style="left:30.20px;top:1098.20px;width:2106.00px;height:28.50px;background:#2678a2;"></div>
<svg class="r" style="left:0;top:0;pointer-events:none" width="2184" height="1379" viewBox="0 0 2184 1379"><rect x="13.50" y="1068.90" width="2122.70" height="1.40" fill="#9a9a9a"/><rect x="13.50" y="1097.40" width="2122.70" height="1.40" fill="#9a9a9a"/><rect x="13.50" y="1125.90" width="2122.70" height="1.40" fill="#9a9a9a"/><rect x="13.50" y="1154.40" width="2122.70" height="1.40" fill="#9a9a9a"/><rect x="13.50" y="1182.90" width="2122.70" height="1.40" fill="#9a9a9a"/><rect x="13.50" y="1211.40" width="2122.70" height="1.40" fill="#9a9a9a"/><rect x="13.50" y="1239.90" width="2122.70" height="1.40" fill="#9a9a9a"/><rect x="29.70" y="1041.60" width="1.40" height="200.50" fill="#9a9a9a"/><rect x="89.70" y="1041.60" width="1.40" height="200.50" fill="#9a9a9a"/><rect x="778.00" y="1041.60" width="1.40" height="200.50" fill="#9a9a9a"/><rect x="932.50" y="1041.60" width="1.40" height="200.50" fill="#9a9a9a"/><rect x="1058.60" y="1041.60" width="1.40" height="200.50" fill="#9a9a9a"/><rect x="1203.80" y="1041.60" width="1.40" height="200.50" fill="#9a9a9a"/><rect x="1362.60" y="1041.60" width="1.40" height="200.50" fill="#9a9a9a"/><rect x="1488.80" y="1041.60" width="1.40" height="200.50" fill="#9a9a9a"/><rect x="1615.00" y="1041.60" width="1.40" height="200.50" fill="#9a9a9a"/><rect x="1741.00" y="1041.60" width="1.40" height="200.50" fill="#9a9a9a"/><rect x="1867.30" y="1041.60" width="1.40" height="200.50" fill="#9a9a9a"/><rect x="2135.50" y="1041.60" width="1.40" height="200.50" fill="#9a9a9a"/></svg>
<div class="r" style="left:30.60px;top:1098.80px;width:2105.60px;height:1.00px;background:none;border-top:1px dotted #ff9a5a;"></div>
<div class="r" style="left:30.60px;top:1124.90px;width:2105.60px;height:1.00px;background:none;border-top:1px dotted #ff9a5a;"></div>
<div class="r" style="left:30.60px;top:1098.80px;width:1.00px;height:26.50px;background:none;border-left:1px dotted #ff9a5a;"></div>
<span class="t dj" style="left:34.80px;top:1045.64px;font-size:15.5px;line-height:20px;color:#000;font-weight:bold;letter-spacing:-0.718px;">4239</span>
<span class="t dj" style="left:92.00px;top:1045.64px;font-size:15.5px;line-height:20px;color:#000;font-weight:bold;letter-spacing:0.041px;">!Стандарт</span>
<span class="t dj" style="left:783.80px;top:1045.64px;font-size:15.5px;line-height:20px;color:#000;font-weight:bold;letter-spacing:-0.635px;">-5,000</span>
<span class="t dj" style="left:937.60px;top:1045.64px;font-size:15.5px;line-height:20px;color:#000;font-weight:bold;letter-spacing:-0.961px;">0,000</span>
<span class="t dj" style="left:1207.80px;top:1045.64px;font-size:15.5px;line-height:20px;color:#000;font-weight:bold;letter-spacing:-0.237px;">Розничная</span>
<span class="t dj" style="left:34.80px;top:1074.14px;font-size:15.5px;line-height:20px;color:#000;font-weight:bold;letter-spacing:-1.052px;">4240</span>
<span class="t dj" style="left:93.00px;top:1074.14px;font-size:15.5px;line-height:20px;color:#000;font-weight:bold;letter-spacing:-0.023px;">&lt;не определено&gt;</span>
<span class="t dj" style="left:783.80px;top:1074.14px;font-size:15.5px;line-height:20px;color:#000;font-weight:bold;letter-spacing:-0.635px;">-5,000</span>
<span class="t dj" style="left:937.60px;top:1074.14px;font-size:15.5px;line-height:20px;color:#000;font-weight:bold;letter-spacing:-0.961px;">0,000</span>
<span class="t dj" style="left:1207.80px;top:1074.14px;font-size:15.5px;line-height:20px;color:#000;font-weight:bold;letter-spacing:-0.237px;">Розничная</span>
<span class="t dj" style="left:34.80px;top:1102.64px;font-size:15.5px;line-height:20px;color:#ffffff;font-weight:bold;letter-spacing:-0.718px;">4236</span>
<span class="t dj" style="left:94.00px;top:1102.64px;font-size:15.5px;line-height:20px;color:#ffffff;font-weight:bold;letter-spacing:-0.591px;">Акции</span>
<span class="t dj" style="left:783.80px;top:1102.64px;font-size:15.5px;line-height:20px;color:#ffffff;font-weight:bold;letter-spacing:-0.635px;">-5,000</span>
<span class="t dj" style="left:937.60px;top:1102.64px;font-size:15.5px;line-height:20px;color:#ffffff;font-weight:bold;letter-spacing:-0.961px;">0,000</span>
<span class="t dj" style="left:1207.80px;top:1102.64px;font-size:15.5px;line-height:20px;color:#ffffff;font-weight:bold;letter-spacing:-0.237px;">Розничная</span>
<span class="t dj" style="left:34.80px;top:1131.14px;font-size:15.5px;line-height:20px;color:#000;font-weight:bold;letter-spacing:-0.718px;">4245</span>
<span class="t dj" style="left:93.00px;top:1131.14px;font-size:15.5px;line-height:20px;color:#000;font-weight:bold;letter-spacing:-0.228px;">Биологически активные вещества</span>
<span class="t dj" style="left:783.80px;top:1131.14px;font-size:15.5px;line-height:20px;color:#000;font-weight:bold;letter-spacing:-0.635px;">-5,000</span>
<span class="t dj" style="left:937.60px;top:1131.14px;font-size:15.5px;line-height:20px;color:#000;font-weight:bold;letter-spacing:-0.961px;">0,000</span>
<span class="t dj" style="left:1207.80px;top:1131.14px;font-size:15.5px;line-height:20px;color:#000;font-weight:bold;letter-spacing:-0.237px;">Розничная</span>
<span class="t dj" style="left:34.80px;top:1159.64px;font-size:15.5px;line-height:20px;color:#000;font-weight:bold;letter-spacing:-0.718px;">4243</span>
<span class="t dj" style="left:93.00px;top:1159.64px;font-size:15.5px;line-height:20px;color:#000;font-weight:bold;letter-spacing:-0.247px;">Гос.регулирование (Нац. перечень)</span>
<span class="t dj" style="left:783.80px;top:1159.64px;font-size:15.5px;line-height:20px;color:#000;font-weight:bold;letter-spacing:-0.635px;">-5,000</span>
<span class="t dj" style="left:937.60px;top:1159.64px;font-size:15.5px;line-height:20px;color:#000;font-weight:bold;letter-spacing:-0.961px;">0,000</span>
<span class="t dj" style="left:1207.80px;top:1159.64px;font-size:15.5px;line-height:20px;color:#000;font-weight:bold;letter-spacing:-0.237px;">Розничная</span>
<span class="t dj" style="left:34.80px;top:1188.14px;font-size:15.5px;line-height:20px;color:#000;font-weight:bold;letter-spacing:-0.718px;">4242</span>
<span class="t dj" style="left:93.00px;top:1188.14px;font-size:15.5px;line-height:20px;color:#000;font-weight:bold;letter-spacing:-0.209px;">Гос.регулирование 15%</span>
<span class="t dj" style="left:783.80px;top:1188.14px;font-size:15.5px;line-height:20px;color:#000;font-weight:bold;letter-spacing:-0.635px;">-5,000</span>
<span class="t dj" style="left:937.60px;top:1188.14px;font-size:15.5px;line-height:20px;color:#000;font-weight:bold;letter-spacing:-0.961px;">0,000</span>
<span class="t dj" style="left:1207.80px;top:1188.14px;font-size:15.5px;line-height:20px;color:#000;font-weight:bold;letter-spacing:-0.237px;">Розничная</span>
<span class="t dj" style="left:34.80px;top:1216.64px;font-size:15.5px;line-height:20px;color:#000;font-weight:bold;letter-spacing:-0.718px;">4246</span>
<span class="t dj" style="left:94.00px;top:1216.64px;font-size:15.5px;line-height:20px;color:#000;font-weight:bold;letter-spacing:-0.324px;">Дезинфицирующие средства</span>
<span class="t dj" style="left:783.80px;top:1216.64px;font-size:15.5px;line-height:20px;color:#000;font-weight:bold;letter-spacing:-0.635px;">-5,000</span>
<span class="t dj" style="left:937.60px;top:1216.64px;font-size:15.5px;line-height:20px;color:#000;font-weight:bold;letter-spacing:-0.961px;">0,000</span>
<span class="t dj" style="left:1207.80px;top:1216.64px;font-size:15.5px;line-height:20px;color:#000;font-weight:bold;letter-spacing:-0.237px;">Розничная</span>
<svg class="r" style="left:0;top:0;pointer-events:none" width="2184" height="1379" viewBox="0 0 2184 1379"><rect x="1122.30" y="1046.00" width="17.4" height="17.4" fill="#ffffff" stroke="#2e2e2e" stroke-width="1.4"/><rect x="2009.20" y="1046.00" width="17.4" height="17.4" fill="#ffffff" stroke="#2e2e2e" stroke-width="1.4"/><rect x="1122.30" y="1074.50" width="17.4" height="17.4" fill="#ffffff" stroke="#2e2e2e" stroke-width="1.4"/><rect x="2009.20" y="1074.50" width="17.4" height="17.4" fill="#ffffff" stroke="#2e2e2e" stroke-width="1.4"/><rect x="1122.30" y="1103.00" width="17.4" height="17.4" fill="#ffffff" stroke="#2e2e2e" stroke-width="1.4"/><rect x="2009.20" y="1103.00" width="17.4" height="17.4" fill="#ffffff" stroke="#2e2e2e" stroke-width="1.4"/><rect x="1122.30" y="1131.50" width="17.4" height="17.4" fill="#ffffff" stroke="#2e2e2e" stroke-width="1.4"/><rect x="2009.20" y="1131.50" width="17.4" height="17.4" fill="#ffffff" stroke="#2e2e2e" stroke-width="1.4"/><rect x="1122.30" y="1160.00" width="17.4" height="17.4" fill="#ffffff" stroke="#2e2e2e" stroke-width="1.4"/><rect x="2009.20" y="1160.00" width="17.4" height="17.4" fill="#ffffff" stroke="#2e2e2e" stroke-width="1.4"/><rect x="1122.30" y="1188.50" width="17.4" height="17.4" fill="#ffffff" stroke="#2e2e2e" stroke-width="1.4"/><rect x="2009.20" y="1188.50" width="17.4" height="17.4" fill="#ffffff" stroke="#2e2e2e" stroke-width="1.4"/><rect x="1122.30" y="1217.00" width="17.4" height="17.4" fill="#ffffff" stroke="#2e2e2e" stroke-width="1.4"/><rect x="2009.20" y="1217.00" width="17.4" height="17.4" fill="#ffffff" stroke="#2e2e2e" stroke-width="1.4"/></svg>
<svg class="r" style="left:18.70px;top:1105.20px;" width="8.2" height="14.6" viewBox="0 0 8.2 14.6"><path d="M0.300 0.300L8 7.300 0.300 14.300z" fill="#0c0c0c"/></svg>
<div class="r" style="left:13.50px;top:1241.60px;width:2122.70px;height:1.80px;background:#8e8e8e;"></div>
<div class="r" style="left:13.50px;top:1243.40px;width:2122.70px;height:1.80px;background:#b4b4b4;"></div>
<div class="r" style="left:13.50px;top:1245.20px;width:2122.70px;height:33.00px;background:#f0f0f0;"></div>
<div class="r" style="left:29.60px;top:1245.20px;width:1.30px;height:33.00px;background:#b4b4b4;"></div>
<div class="r" style="left:13.50px;top:1277.80px;width:2122.70px;height:1.30px;background:#b9b9b9;"></div>
<div class="r" style="left:92.60px;top:1248.20px;width:685.60px;height:27.00px;background:#e6eaec;border:1px solid #d9dddf;box-sizing:border-box;"></div>
<span class="t dj" style="left:95.80px;top:1252.94px;font-size:15.5px;line-height:20px;color:#000;font-weight:bold;letter-spacing:-0.467px;">Запис 3 із 16</span>
<div class="r" style="left:13.50px;top:1280.60px;width:2122.70px;height:22.40px;background:#f0f0f0;"></div>
<div class="r" style="left:38.40px;top:1280.60px;width:1866.00px;height:22.40px;background:#d2d2d2;"></div>
<svg class="r" style="left:20.60px;top:1286.40px;" width="9.2" height="10.6" viewBox="0 0 9.2 10.6"><path d="M7.800 1.300L2.600 5.300 7.800 9.300" fill="none" stroke="#4f4f4f" stroke-width="2.900"/></svg>
<svg class="r" style="left:2118.80px;top:1286.40px;" width="9.2" height="10.6" viewBox="0 0 9.2 10.6"><path d="M1.400 1.300L6.600 5.300 1.400 9.300" fill="none" stroke="#4f4f4f" stroke-width="2.900"/></svg>
<div class="r" style="left:2137.00px;top:1014.00px;width:24.00px;height:265.00px;background:#f0f0f0;"></div>
<div class="r" style="left:2137.60px;top:1040.00px;width:21.40px;height:93.00px;background:#d2d2d2;"></div>
<svg class="r" style="left:2142.90px;top:1022.20px;" width="10.8" height="9" viewBox="0 0 10.8 9"><path d="M1.300 7.600L5.400 2.500 9.500 7.600" fill="none" stroke="#4f4f4f" stroke-width="2.900"/></svg>
<svg class="r" style="left:2143.00px;top:1262.50px;" width="10.8" height="9" viewBox="0 0 10.8 9"><path d="M1.300 1.400L5.400 6.500 9.500 1.400" fill="none" stroke="#4f4f4f" stroke-width="2.900"/></svg>
<svg class="r" style="left:10.50px;top:1312.20px;" width="190" height="37" viewBox="0 0 190 37"><rect x="1.900" y="1.900" width="186.200" height="33.400" fill="#ffffff" stroke="#0a0a0a" stroke-width="1.700"/></svg>
<span class="t djc" style="left:15.00px;top:1319.76px;font-size:16px;line-height:21px;color:#111;letter-spacing:0.251px;">Головна</span>
<svg class="r" style="left:201.00px;top:1312.20px;" width="190" height="37" viewBox="0 0 190 37"><rect x="1.900" y="1.900" width="186.200" height="33.400" fill="#ffd9ab" stroke="#1682dc" stroke-width="1.700"/></svg>
<span class="t djc" style="left:204.80px;top:1319.76px;font-size:16px;line-height:21px;color:#111;letter-spacing:-0.309px;">Націнки</span>
<div class="r" style="left:0.00px;top:1351.40px;width:2184.00px;height:1.20px;background:#fafafa;"></div>
<span class="t djc" style="left:36.37px;top:1356.30px;font-size:18.5px;line-height:24px;color:#111;transform:scaleX(0.9302);transform-origin:0 0;">База даних: TASA3@TITAN</span>
<span class="t djc" style="left:335.13px;top:1356.30px;font-size:18.5px;line-height:24px;color:#111;transform:scaleX(0.8708);transform-origin:0 0;">Користувач: GIFT</span>
<span class="t djc" style="left:642.78px;top:1356.30px;font-size:18.5px;line-height:24px;color:#111;transform:scaleX(0.7222);transform-origin:0 0;">1</span>
<span class="t djc" style="left:673.13px;top:1356.30px;font-size:18.5px;line-height:24px;color:#111;transform:scaleX(0.8683);transform-origin:0 0;">Кассовый аппарат не подключен</span>
<span class="t djc" style="left:1130.15px;top:1356.30px;font-size:18.5px;line-height:24px;color:#111;transform:scaleX(0.8531);transform-origin:0 0;">Зона: Склад [1]</span>
<div class="r" style="left:304.00px;top:1354.00px;width:1.30px;height:25.00px;background:#c8c8c8;"></div>
<div class="r" style="left:610.20px;top:1354.00px;width:1.30px;height:25.00px;background:#c8c8c8;"></div>
<div class="r" style="left:668.50px;top:1354.00px;width:1.30px;height:25.00px;background:#c8c8c8;"></div>
<div class="r" style="left:1125.00px;top:1354.00px;width:1.30px;height:25.00px;background:#c8c8c8;"></div>
<svg class="r" style="left:11.40px;top:1356.80px;" width="19" height="21.4" viewBox="0 0 19 21.4"><path d="M0.600 2.400Q9 -1.200 18 1.200V18.600Q9 22.600 1.600 19.800z" fill="url(#dbg)"/><path d="M0.800 5.800H18V16.200H1.200z" fill="url(#dbb)"/><path d="M1 8.200H18M1 10.800H18M1 13.400H18" stroke="#8cc0f4" stroke-width=".8"/><path d="M0.600 2.400Q9 5.400 18 1.200" fill="none" stroke="#e0e0f0" stroke-width=".8"/></svg>
<svg class="r" style="left:310.80px;top:1356.40px;" width="17" height="21.6" viewBox="0 0 17 21.6"><circle cx="5.800" cy="5.600" r="5.400" fill="#f0301c"/><path d="M0.600 21.200C0.400 16.600 2.600 13.600 8.200 13.600s7.800 3 7.600 7.600z" fill="#8888d8" stroke="#6464b8" stroke-width=".8"/><circle cx="8.600" cy="8.200" r="4.900" fill="#9a9ae0" stroke="#6c6cc0" stroke-width=".8"/><path d="M5.800 10.600h5.600l-1 2.400q-1.800 1.200-3.600 0z" fill="#f4a040"/><path d="M5.200 6.200q3.400-2.200 6.800 0v2.200H5.200z" fill="#b4b4ea"/><path d="M6.600 15.200l1.600 1.600 1.600-1.600" stroke="#e8e8fa" stroke-width="1" fill="none"/></svg>
<svg class="r" style="left:614.20px;top:1355.40px;" width="20.4" height="23" viewBox="0 0 20.400 23"><path d="M0.800 9.400L3 5.600 6 3H11.500L13 2 19.500 8.500V18.800L15.500 19.200 12 14.500 6.500 13.200 1.200 17.500z" fill="url(#plg)"/><path d="M12.800 0.400L14.200 2.800 16.400 6" stroke="#3a3a4a" stroke-width="1" fill="none"/><path d="M5.200 11.200L2.400 19.600" stroke="#50400c" stroke-width="3.600"/><path d="M5.200 11.200L2.400 19.600" stroke="#f0c428" stroke-width="2"/><path d="M13.600 15L10.800 22.200" stroke="#50400c" stroke-width="3.600"/><path d="M13.600 15L10.800 22.200" stroke="#f0c428" stroke-width="2"/></svg>
<svg class="r" style="left:0.00px;top:0.00px;pointer-events:none;" width="2184" height="1379" viewBox="0 0 2184 1379"><path d="M422.6 507.6L193.4 208.6 191.1 214.1 187.5 195.3 204.6 203.9 198.7 204.6z" fill="#f20808" stroke="#f20808" stroke-width="0.8" stroke-linejoin="round"/></svg>
<div class="r" style="left:5.90px;top:159.00px;width:2172.20px;height:780.10px;background:transparent;box-shadow:0 0 0 3000px rgba(0,0,0,0.30);pointer-events:none;"></div>
</body></html>
